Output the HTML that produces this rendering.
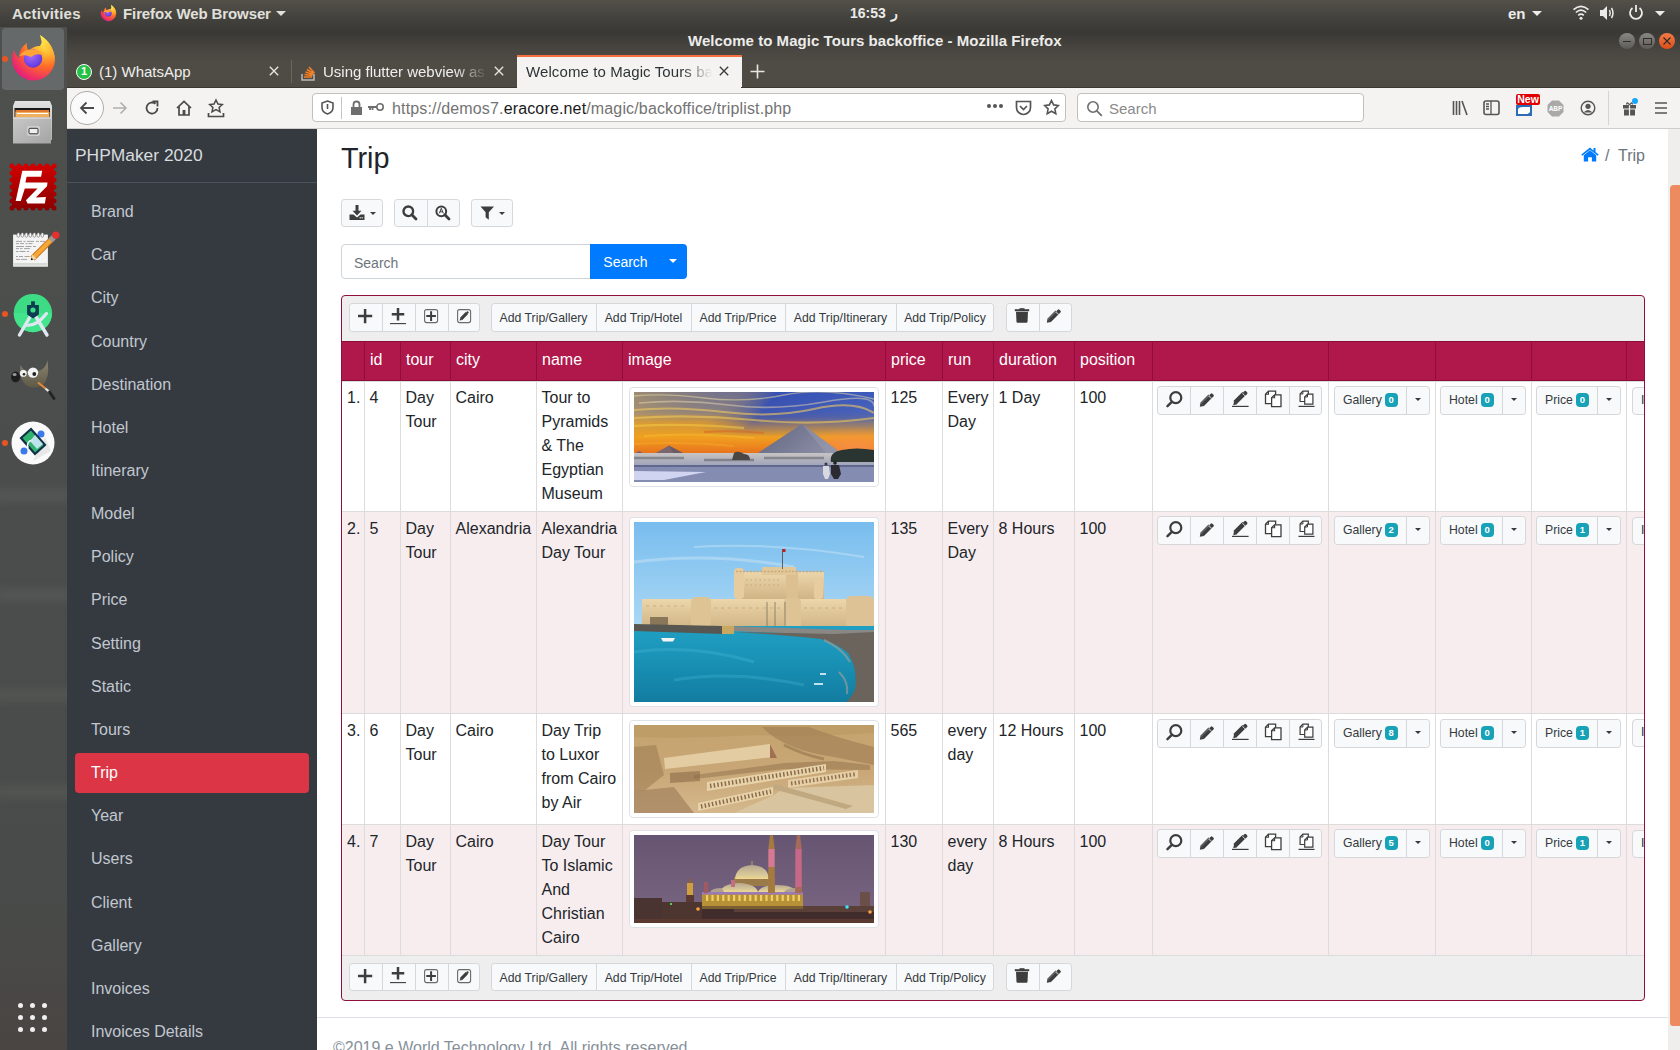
<!DOCTYPE html>
<html><head><meta charset="utf-8">
<style>
*{box-sizing:border-box;margin:0;padding:0}
html,body{width:1680px;height:1050px;overflow:hidden;background:#fff;font-family:"Liberation Sans",sans-serif;position:relative}
.a{position:absolute}
#topbar{left:0;top:0;width:1680px;height:27px;background:linear-gradient(#53504a,#3c3b37);color:#eee;font-size:15px}
#dock{left:0;top:27px;width:67px;height:1023px;background:linear-gradient(#4e504d 0%,#4a4d4c 50%,#484b49 85%,#4a4543 100%)}
#winhead{left:67px;top:27px;width:1613px;height:61px;background:linear-gradient(#3d3c38 0%,#393834 8%,#4a4742 40%,#4f4c46 60%,#4e4b45 100%)}
#nav{left:67px;top:88px;width:1613px;height:41px;background:#f4f3f1;border-bottom:1px solid #cfcdca}
#sidebar{left:67px;top:129px;width:250px;height:921px;background:#343a40}
#main{left:317px;top:129px;width:1351px;height:921px;background:#fff}
#sb{left:1668px;top:129px;width:12px;height:921px;background:#efeeed}
#thumb{left:1670px;top:185px;width:10px;height:841px;background:#ee8a5f;border-radius:4px 0 0 3px}
.nl{position:absolute;left:91px;font-size:16px;color:#c2c7d0;line-height:24px}
</style></head><body>

<div id="topbar" class="a">
  <div class="a" style="left:12px;top:5px;font-size:15px;font-weight:bold;color:#e0e0dc;letter-spacing:0.2px">Activities</div>
  <svg class="a" style="left:100px;top:4px" width="17" height="18" viewBox="0 0 47 48"><defs><radialGradient id="fxta" cx="0.78" cy="0.15" r="1"><stop offset="0" stop-color="#fff44f"/><stop offset="0.3" stop-color="#ffb02e"/><stop offset="0.55" stop-color="#ff6a2a"/><stop offset="0.8" stop-color="#f0365e"/><stop offset="1" stop-color="#e31587"/></radialGradient><radialGradient id="fxtb" cx="0.4" cy="0.35" r="0.7"><stop offset="0" stop-color="#a86bff"/><stop offset="1" stop-color="#5a36d8"/></radialGradient><linearGradient id="fxtc" x1="0" y1="0" x2="1" y2="1"><stop offset="0" stop-color="#fff44f"/><stop offset="1" stop-color="#ff9a2a"/></linearGradient></defs><path d="M30 1 Q44 10 45 26 A21.5 21.5 0 1 1 4 16 Q6 22 9 24 Q9 14 17 9 Q16 14 19 17 Q23 12 30 12 Q34 6 30 1z" fill="url(#fxta)"/><circle cx="23" cy="24.5" r="9.3" fill="url(#fxtb)"/><path d="M9 22 Q16 13 27 16 Q33 18 34 22 Q27 18 21 23 Q16 20 9 22z" fill="#ffa436"/><path d="M30 1 Q44 10 45 26 Q41 16 33 13z" fill="url(#fxtc)" opacity="0.9"/></svg>
  <div class="a" style="left:123px;top:5px;font-size:15px;font-weight:bold;color:#e0e0dc;letter-spacing:-0.1px">Firefox Web Browser</div>
  <div class="a" style="left:276px;top:11px;width:0;height:0;border-left:5px solid transparent;border-right:5px solid transparent;border-top:5px solid #e0e0dc"></div>
  <div class="a" style="left:850px;top:5px;font-size:14px;font-weight:bold;color:#ececea">16:53</div>
  <div class="a" style="left:891px;top:5px;font-size:14px;font-weight:bold;color:#ececea">ر</div>
  <div class="a" style="left:1508px;top:5px;font-size:15px;font-weight:bold;color:#ececea">en</div>
  <div class="a" style="left:1532px;top:11px;width:0;height:0;border-left:5px solid transparent;border-right:5px solid transparent;border-top:5px solid #ececea"></div>
  <svg class="a" style="left:1572px;top:5px" width="18" height="15" viewBox="0 0 18 16"><path d="M1 5 Q9 -2 17 5" stroke="#ececea" stroke-width="1.8" fill="none"/><path d="M3.5 8 Q9 3 14.5 8" stroke="#ececea" stroke-width="1.8" fill="none"/><path d="M6 11 Q9 8.5 12 11" stroke="#ececea" stroke-width="1.8" fill="none"/><circle cx="9" cy="14" r="1.6" fill="#ececea"/></svg>
  <svg class="a" style="left:1599px;top:5px" width="17" height="16" viewBox="0 0 17 16"><path d="M1 5h3l4-4v14l-4-4H1z" fill="#ececea"/><path d="M10.5 5 Q12 8 10.5 11" stroke="#ececea" stroke-width="1.5" fill="none"/><path d="M12.5 3 Q15.5 8 12.5 13" stroke="#ececea" stroke-width="1.5" fill="none"/></svg>
  <svg class="a" style="left:1628px;top:4px" width="16" height="17" viewBox="0 0 16 17"><path d="M4.5 4 A6 6 0 1 0 11.5 4" stroke="#ececea" stroke-width="1.8" fill="none"/><path d="M8 1v7" stroke="#ececea" stroke-width="1.8"/></svg>
  <div class="a" style="left:1655px;top:11px;width:0;height:0;border-left:5px solid transparent;border-right:5px solid transparent;border-top:5px solid #ececea"></div>
</div>
<div id="dock" class="a" style="overflow:hidden">
  <div class="a" style="left:-5px;top:461px;width:80px;height:14px;background:rgba(200,200,190,0.07);filter:blur(4px)"></div>
  <div class="a" style="left:-5px;top:561px;width:80px;height:14px;background:rgba(200,200,190,0.07);filter:blur(4px)"></div>
  <div class="a" style="left:-5px;top:661px;width:80px;height:14px;background:rgba(200,200,190,0.07);filter:blur(4px)"></div>
  <div class="a" style="left:-5px;top:758px;width:80px;height:14px;background:rgba(200,200,190,0.07);filter:blur(4px)"></div>
  <div class="a" style="left:2px;top:1px;width:62px;height:62px;border-radius:4px;background:#666969"></div>
  <div class="a" style="left:2px;top:29px;width:6px;height:6px;border-radius:3px;background:#e95420"></div>
  <svg class="a" style="left:10px;top:7px" width="47" height="48" viewBox="0 0 47 48"><defs><radialGradient id="fxda" cx="0.78" cy="0.15" r="1"><stop offset="0" stop-color="#fff44f"/><stop offset="0.3" stop-color="#ffb02e"/><stop offset="0.55" stop-color="#ff6a2a"/><stop offset="0.8" stop-color="#f0365e"/><stop offset="1" stop-color="#e31587"/></radialGradient><radialGradient id="fxdb" cx="0.4" cy="0.35" r="0.7"><stop offset="0" stop-color="#a86bff"/><stop offset="1" stop-color="#5a36d8"/></radialGradient><linearGradient id="fxdc" x1="0" y1="0" x2="1" y2="1"><stop offset="0" stop-color="#fff44f"/><stop offset="1" stop-color="#ff9a2a"/></linearGradient></defs><path d="M30 1 Q44 10 45 26 A21.5 21.5 0 1 1 4 16 Q6 22 9 24 Q9 14 17 9 Q16 14 19 17 Q23 12 30 12 Q34 6 30 1z" fill="url(#fxda)"/><circle cx="23" cy="24.5" r="9.3" fill="url(#fxdb)"/><path d="M9 22 Q16 13 27 16 Q33 18 34 22 Q27 18 21 23 Q16 20 9 22z" fill="#ffa436"/><path d="M30 1 Q44 10 45 26 Q41 16 33 13z" fill="url(#fxdc)" opacity="0.9"/></svg>
  <svg class="a" style="left:10px;top:73px" width="44" height="45" viewBox="0 0 44 45"><defs><linearGradient id="cab" x1="0" y1="0" x2="0" y2="1"><stop offset="0" stop-color="#e2e2e2"/><stop offset="1" stop-color="#b0b0b0"/></linearGradient><linearGradient id="cab2" x1="0" y1="0" x2="1" y2="1"><stop offset="0" stop-color="#c8c8c8"/><stop offset="1" stop-color="#a4a4a4"/></linearGradient></defs><path d="M3 6 L5 1 H40 L42 6 V40 H3z" fill="url(#cab)"/><rect x="4.5" y="8" width="35.5" height="9.5" fill="#1a1a1a"/><rect x="5.5" y="10" width="33.5" height="7" fill="#e07a30"/><rect x="5.5" y="12" width="34" height="5.5" fill="#f0b060"/><rect x="7" y="13" width="31" height="1" fill="#fff"/><rect x="3" y="17.5" width="38" height="26" fill="url(#cab2)"/><rect x="3" y="17.5" width="38" height="1" fill="#e8e8e8"/><rect x="17" y="26" width="13" height="10" rx="2" fill="#d0d0d0"/><rect x="19" y="28.3" width="9" height="5.5" rx="1" fill="#eee" stroke="#333" stroke-width="1"/></svg>
  <svg class="a" style="left:9px;top:136px" width="48" height="48" viewBox="0 0 48 48"><defs><linearGradient id="fzg" x1="0" y1="0" x2="0" y2="1"><stop offset="0" stop-color="#cf0000"/><stop offset="1" stop-color="#8e0000"/></linearGradient></defs><rect x="3" y="3" width="42" height="42" fill="url(#fzg)"/><rect x="3" y="3" width="42" height="42" fill="none" stroke="url(#fzg)" stroke-width="5" stroke-dasharray="0 7" stroke-linecap="round"/><path d="M13.3 7.7H33.2L32.1 13.8H17.6L16.4 19.5H38.5L38 23.2L26.8 34.4L36.9 34L35.9 40.5H18.6L17 37.3L28.5 25.6H15.8L11.8 37.9H6.7Z" fill="#fff"/></svg>
  <svg class="a" style="left:5px;top:195px" width="57" height="53" viewBox="0 0 57 53"><rect x="8.1" y="12.6" width="34.8" height="32.1" fill="#f4f4f4"/><rect x="8.6" y="41" width="33.8" height="2.6" fill="#d6dad4"/><ellipse cx="13.3" cy="13" rx="1.4" ry="2.3" fill="#fafafa" stroke="#666" stroke-width="0.6"/><ellipse cx="17.3" cy="13" rx="1.4" ry="2.3" fill="#fafafa" stroke="#666" stroke-width="0.6"/><ellipse cx="21.3" cy="13" rx="1.4" ry="2.3" fill="#fafafa" stroke="#666" stroke-width="0.6"/><ellipse cx="25.3" cy="13" rx="1.4" ry="2.3" fill="#fafafa" stroke="#666" stroke-width="0.6"/><ellipse cx="29.3" cy="13" rx="1.4" ry="2.3" fill="#fafafa" stroke="#666" stroke-width="0.6"/><ellipse cx="33.3" cy="13" rx="1.4" ry="2.3" fill="#fafafa" stroke="#666" stroke-width="0.6"/><ellipse cx="37.3" cy="13" rx="1.4" ry="2.3" fill="#fafafa" stroke="#666" stroke-width="0.6"/><path d="M11 19.4h6M18.5 19.4h2M22 19.4h7M31 19.4h3M35 19.4h5M11 21.6h3M15 21.6h4M20.5 21.6h2M23.5 21.6h4M11 24.5h8M20.5 24.5h6M28 24.5h3M11 26.6h3M15 26.6h2.5M19 26.6h6M11 29.5h2.5M14.5 29.5h6M22 29.5h2M11 34.5h2M14 34.5h4M19.5 34.5h5M11 37.4h4M16 37.4h6" stroke="#9a9a9a" stroke-width="0.9"/><path d="M27.5 36.5L47.5 16.5" stroke="#c86a10" stroke-width="6"/><path d="M27.8 36.2L47.2 16.8" stroke="#f4a838" stroke-width="4.2"/><path d="M25.8 38.2L27.2 32.5L31.5 36.8z" fill="#f0d8b0"/><path d="M25.8 38.2L26.4 35.8L28.2 37.6z" fill="#111"/><path d="M45.5 18.5L49 15" stroke="#9a9a9a" stroke-width="5.5"/><circle cx="50.8" cy="13.2" r="3.6" fill="#e83030"/></svg>
  <div class="a" style="left:2px;top:284px;width:6px;height:6px;border-radius:3px;background:#e95420"></div>
  <svg class="a" style="left:8px;top:258px" width="50" height="60" viewBox="0 0 50 60"><circle cx="24.9" cy="28.1" r="19.2" fill="#3ddc84"/><path d="M5.7 28.1A19.2 19.2 0 0 0 44.1 28.1z" fill="#45e890" opacity="0.7"/><path d="M11.5 50 L22.5 31 M39 50 L27.5 31" stroke="#dfe8f2" stroke-width="3.4" stroke-linecap="round"/><path d="M17.5 40 Q28 42 38.5 28.5" stroke="#dfe8f2" stroke-width="3.2" fill="none" stroke-linecap="round"/><path d="M19.1 20h11.8v9.5L25 33.5l-5.9-4z" fill="#0d3b50"/><rect x="23.1" y="16.3" width="3.8" height="4" fill="#0d3b50"/><circle cx="25" cy="25" r="2.6" fill="#3ddc84"/></svg>
  <svg class="a" style="left:5px;top:323px" width="57" height="60" viewBox="0 0 57 60"><defs><linearGradient id="gmp" x1="0" y1="0" x2="0" y2="1"><stop offset="0" stop-color="#8a8470"/><stop offset="1" stop-color="#5e5846"/></linearGradient></defs><path d="M15.4 15Q14 30 22 36Q30 40 38 35Q45 28 42.6 10.6Q40 20 33 21L22 21Q18 20 15.4 15z" fill="url(#gmp)"/><ellipse cx="10.6" cy="26.9" rx="4.6" ry="5.3" fill="#1e1e1e"/><ellipse cx="9.6" cy="24.6" rx="2" ry="1.5" fill="#9a9a9a"/><circle cx="18.3" cy="23.4" r="3.4" fill="#f2f2f2"/><circle cx="19" cy="24.2" r="1.3" fill="#222"/><circle cx="28" cy="22.6" r="5.2" fill="#f2f2f2"/><circle cx="29.3" cy="24" r="1.9" fill="#222"/><path d="M33 32.5L40.5 38.5" stroke="#e08a3a" stroke-width="2.2"/><path d="M40.5 38.5L44.5 42" stroke="#e8e8e8" stroke-width="2.2"/><path d="M44.5 42L49 48.5" stroke="#222" stroke-width="2.8" stroke-linecap="round"/></svg>
  <div class="a" style="left:2px;top:413px;width:6px;height:6px;border-radius:3px;background:#e95420"></div>
  <svg class="a" style="left:11px;top:394px" width="44" height="44" viewBox="0 0 44 44"><circle cx="22" cy="22" r="21.5" fill="#fafafa"/><path d="M22 40 L40 30 L34 16z" fill="#e0e0e0" opacity="0.7"/><circle cx="13" cy="30" r="3.5" fill="#3b7ae8"/><circle cx="30" cy="13" r="3.5" fill="#3b7ae8"/><path d="M10 17 L20 8 L34 24 L24 33z" fill="#2fb36e" stroke="#103048" stroke-width="2.2"/><path d="M22 19 Q15 20 17 27" stroke="#fff" stroke-width="1.5" fill="none"/><path d="M24 14 L32 23 L26 28 L19 20z" fill="#cde8f8" opacity="0.9"/></svg>
  <div class="a" style="left:18px;top:976px;width:5px;height:5px;border-radius:50%;background:#f0f0f0;box-shadow:12px 0 0 #f0f0f0,24px 0 0 #f0f0f0,0 12px 0 #f0f0f0,12px 12px 0 #f0f0f0,24px 12px 0 #f0f0f0,0 24px 0 #f0f0f0,12px 24px 0 #f0f0f0,24px 24px 0 #f0f0f0"></div>
</div>
</div>
<div id="winhead" class="a">
  <div class="a" style="left:621px;top:5px;font-size:15px;font-weight:bold;color:#ececea;letter-spacing:0.05px">Welcome to Magic Tours backoffice - Mozilla Firefox</div>
  <div class="a" style="left:1552px;top:6px;width:16px;height:16px;border-radius:50%;background:linear-gradient(#8a8884,#5c5a56)"><div class="a" style="left:4px;top:7.5px;width:8px;height:1.3px;background:#2f2e2a"></div></div>
  <div class="a" style="left:1572px;top:6px;width:16px;height:16px;border-radius:50%;background:linear-gradient(#8a8884,#5c5a56)"><div class="a" style="left:3.5px;top:4.5px;width:9px;height:7px;border:1.3px solid #2f2e2a"></div></div>
  <div class="a" style="left:1592px;top:6px;width:16px;height:16px;border-radius:50%;background:linear-gradient(#f47a45,#dc4f1c)"><svg class="a" style="left:4px;top:4px" width="8" height="8" viewBox="0 0 8 8"><path d="M0.5 0.5l7 7M7.5 0.5l-7 7" stroke="#2a2a2a" stroke-width="1.1"/></svg></div>
  <!-- tabs -->
  <div class="a" style="left:9px;top:37px;width:16px;height:16px;border-radius:50%;background:#25c143;border:1.5px solid #fff"></div>
  <div class="a" style="left:14px;top:38px;font-size:11px;font-weight:bold;color:#fff">1</div>
  <div class="a" style="left:32px;top:36px;font-size:15px;color:#eeeeec">(1) WhatsApp</div>
  <svg class="a" style="left:202.0px;top:39px" width="10" height="10" viewBox="0 0 10 10"><path d="M0.8 0.8l8.4 8.4M9.2 0.8L0.8 9.2" stroke="#e7e6e3" stroke-width="1.35"/></svg>
  <div class="a" style="left:224px;top:33px;width:1px;height:23px;background:#6a6760"></div>
  <svg class="a" style="left:234px;top:37px" width="15" height="17" viewBox="0 0 15 17"><path d="M1 10v6h12v-6" stroke="#bcbbbb" stroke-width="1.5" fill="none"/><path d="M3 13h8M3.5 10.5l8 1M4.5 8l7.5 2.5M6 5.5l6.5 4M8 3l5.5 6" stroke="#f48024" stroke-width="1.6"/></svg>
  <div class="a" style="left:256px;top:36px;width:165px;overflow:hidden;white-space:nowrap;font-size:15px;color:#eeeeec;-webkit-mask-image:linear-gradient(90deg,#000 80%,transparent)">Using flutter webview as a</div>
  <svg class="a" style="left:426.5px;top:39px" width="10" height="10" viewBox="0 0 10 10"><path d="M0.8 0.8l8.4 8.4M9.2 0.8L0.8 9.2" stroke="#e7e6e3" stroke-width="1.35"/></svg>
  <div class="a" style="left:450px;top:28px;width:225px;height:33px;background:#f4f3f1;border-top:2px solid #f4703f"></div>
  <div class="a" style="left:459px;top:36px;width:186px;overflow:hidden;white-space:nowrap;font-size:15px;color:#2e3436;letter-spacing:0.1px;-webkit-mask-image:linear-gradient(90deg,#000 84%,transparent 100%)">Welcome to Magic Tours backoffice</div>
  <svg class="a" style="left:652.0px;top:39px" width="10" height="10" viewBox="0 0 10 10"><path d="M0.8 0.8l8.4 8.4M9.2 0.8L0.8 9.2" stroke="#3c3c3c" stroke-width="1.35"/></svg>
  <svg class="a" style="left:683px;top:37px" width="15" height="15" viewBox="0 0 15 15"><path d="M7.5 0.5v14M0.5 7.5h14" stroke="#e7e6e3" stroke-width="1.6"/></svg>
</div>
<div class="a" style="left:67px;top:87px;width:450px;height:1px;background:#393833"></div>
<div class="a" style="left:741px;top:87px;width:939px;height:1px;background:#393833"></div>
<div id="nav" class="a">
  <div class="a" style="left:3px;top:3px;width:34px;height:34px;border-radius:50%;border:1px solid #aeaca8;background:#fafafa"></div>
  <svg class="a" style="left:11px;top:11px" width="18" height="18" viewBox="0 0 18 18"><path d="M16 9H3M8.5 3.5L3 9l5.5 5.5" stroke="#4a4a4a" stroke-width="1.8" fill="none"/></svg>
  <svg class="a" style="left:44px;top:11px" width="18" height="18" viewBox="0 0 18 18"><path d="M2 9h13M9.5 3.5L15 9l-5.5 5.5" stroke="#b0b0b0" stroke-width="1.6" fill="none"/></svg>
  <svg class="a" style="left:76px;top:11px" width="18" height="18" viewBox="0 0 18 18"><path d="M14.5 9A5.5 5.5 0 1 1 12.5 4.8" stroke="#4a4a4a" stroke-width="1.8" fill="none"/><path d="M9.5 2.5h5v5" stroke="#4a4a4a" stroke-width="1.8" fill="none"/></svg>
  <svg class="a" style="left:108px;top:11px" width="18" height="18" viewBox="0 0 18 18"><path d="M2 9l7-6.5L16 9M4 7.5V16h10V7.5" stroke="#4a4a4a" stroke-width="1.7" fill="none"/><rect x="7.6" y="11" width="2.8" height="5" fill="#4a4a4a"/></svg>
  <svg class="a" style="left:140px;top:10px" width="18" height="20" viewBox="0 0 18 20"><path d="M9 2l2 4 4.3.5-3.2 3 .9 4.3L9 11.6l-4 2.2.9-4.3-3.2-3L7 6z" stroke="#4a4a4a" stroke-width="1.5" fill="none"/><path d="M1.5 15v3.5h15V15" stroke="#4a4a4a" stroke-width="1.7" fill="none"/></svg>
  <div class="a" style="left:245px;top:5px;width:754px;height:29px;border:1px solid #c2c0bb;border-radius:4px;background:#fff"></div>
  <svg class="a" style="left:254px;top:12px" width="13" height="15" viewBox="0 0 13 15"><path d="M6.5 1L12 3v4.5c0 3.5-2.5 5.5-5.5 6.5C3.5 13 1 11 1 7.5V3z" stroke="#555" stroke-width="1.6" fill="none"/><path d="M6.5 4v5" stroke="#555" stroke-width="1.6"/></svg>
  <div class="a" style="left:274px;top:9px;width:1px;height:22px;background:#c8c6c2"></div>
  <svg class="a" style="left:283px;top:12px" width="13" height="15" viewBox="0 0 13 15"><path d="M3.5 7V4.5a3 3 0 0 1 6 0V7" stroke="#6e6e6e" stroke-width="1.8" fill="none"/><rect x="1" y="7" width="11" height="8" fill="#6e6e6e"/></svg>
  <svg class="a" style="left:300px;top:14px" width="18" height="10" viewBox="0 0 18 10"><circle cx="13" cy="5" r="3.2" stroke="#6e6e6e" stroke-width="1.6" fill="none"/><path d="M1 5h9M3 5v3M5.5 5v3" stroke="#6e6e6e" stroke-width="1.8"/></svg>
  <div class="a" style="left:325px;top:12px;font-size:16px;color:#737373;white-space:nowrap;letter-spacing:0.15px">https://demos7.<span style="color:#1a1a1a">eracore.net</span>/magic/backoffice/triplist.php</div>
  <div class="a" style="left:920px;top:16px;width:4px;height:4px;border-radius:2px;background:#555;box-shadow:6px 0 0 #555,12px 0 0 #555"></div>
  <svg class="a" style="left:948px;top:12px" width="17" height="16" viewBox="0 0 17 16"><path d="M1.5 1.5h14v6a7 7 0 0 1-14 0z" stroke="#555" stroke-width="1.7" fill="none"/><path d="M5 6l3.5 3.5L12 6" stroke="#555" stroke-width="1.7" fill="none"/></svg>
  <svg class="a" style="left:976px;top:11px" width="17" height="17" viewBox="0 0 17 17"><path d="M8.5 1.5l2.1 4.4 4.8.6-3.5 3.3.9 4.8-4.3-2.4-4.3 2.4.9-4.8L1.6 6.5l4.8-.6z" stroke="#555" stroke-width="1.6" fill="none"/></svg>
  <div class="a" style="left:1010px;top:5px;width:287px;height:29px;border:1px solid #c2c0bb;border-radius:4px;background:#fff"></div>
  <svg class="a" style="left:1019px;top:12px" width="17" height="17" viewBox="0 0 17 17"><circle cx="7" cy="7" r="5.2" stroke="#6e6e6e" stroke-width="1.6" fill="none"/><path d="M10.8 10.8l5 5" stroke="#6e6e6e" stroke-width="1.8"/></svg>
  <div class="a" style="left:1042px;top:12px;font-size:15px;color:#8a8a8a">Search</div>
  <svg class="a" style="left:1385px;top:12px" width="16" height="16" viewBox="0 0 16 16"><path d="M1.5 1v14M4.5 1v14M7.5 1v14M10 1l5 14" stroke="#555" stroke-width="1.6"/></svg>
  <svg class="a" style="left:1416px;top:12px" width="17" height="16" viewBox="0 0 17 16"><rect x="1" y="1" width="15" height="13.5" rx="2" stroke="#555" stroke-width="1.6" fill="none"/><path d="M8 1v13.5M3 4h3M3 6.5h3M3 9h3" stroke="#555" stroke-width="1.3"/></svg>
  <div class="a" style="left:1449px;top:17px;width:16px;height:11px;background:#2c6db5"></div>
  <div class="a" style="left:1451px;top:19px;width:12px;height:7px;background:#fff;border-radius:40% 0 40% 0"></div>
  <div class="a" style="left:1449px;top:6px;width:24px;height:11px;background:#e30000;border-radius:2px;color:#fff;font-size:10.5px;line-height:11px;text-align:center;font-weight:bold">New</div>
  <svg class="a" style="left:1480px;top:12px" width="17" height="17" viewBox="0 0 17 17"><path d="M5 0.5h7l4.5 4.5v7L12 16.5H5L0.5 12V5z" fill="#a9a9a9"/><text x="8.5" y="11.3" font-size="6.5" font-weight="bold" fill="#fff" text-anchor="middle" font-family="Liberation Sans">ABP</text></svg>
  <svg class="a" style="left:1513px;top:12px" width="16" height="16" viewBox="0 0 16 16"><circle cx="8" cy="8" r="6.8" stroke="#555" stroke-width="1.4" fill="none"/><circle cx="8" cy="6.3" r="2.6" fill="#555"/><path d="M3.5 12.5Q8 7.5 12.5 12.5" fill="#555"/></svg>
  <div class="a" style="left:1541px;top:3px;width:1px;height:34px;background:#d6d4d0"></div>
  <svg class="a" style="left:1555px;top:13px" width="16" height="15" viewBox="0 0 16 15"><rect x="1" y="4" width="13" height="3.5" fill="#555"/><rect x="2" y="8.5" width="11" height="6" fill="#555"/><path d="M7.5 4v11" stroke="#f4f3f1" stroke-width="1.2"/><path d="M7.5 4Q5 0 4.5 3.5M7.5 4Q10 0 10.5 3.5" stroke="#555" stroke-width="1.3" fill="none"/></svg>
  <div class="a" style="left:1565px;top:10px;width:6px;height:6px;border-radius:3px;background:#16a7ff"></div>
  <svg class="a" style="left:1587px;top:13px" width="14" height="14" viewBox="0 0 14 14"><path d="M1 2h12M1 7h12M1 12h12" stroke="#555" stroke-width="1.7"/></svg>
</div>
<div id="sidebar" class="a">
  <div class="a" style="left:8px;top:13px;font-size:17.4px;color:#d9dcdf;line-height:26px">PHPMaker 2020</div>
  <div class="a" style="left:0;top:53px;width:250px;height:1px;background:#4b545c"></div>
  <div class="nl" style="left:24px;top:71.10px">Brand</div>
  <div class="nl" style="left:24px;top:114.25px">Car</div>
  <div class="nl" style="left:24px;top:157.40px">City</div>
  <div class="nl" style="left:24px;top:200.55px">Country</div>
  <div class="nl" style="left:24px;top:243.70px">Destination</div>
  <div class="nl" style="left:24px;top:286.85px">Hotel</div>
  <div class="nl" style="left:24px;top:330.00px">Itinerary</div>
  <div class="nl" style="left:24px;top:373.15px">Model</div>
  <div class="nl" style="left:24px;top:416.30px">Policy</div>
  <div class="nl" style="left:24px;top:459.45px">Price</div>
  <div class="nl" style="left:24px;top:502.60px">Setting</div>
  <div class="nl" style="left:24px;top:545.75px">Static</div>
  <div class="nl" style="left:24px;top:588.90px">Tours</div>
  <div class="a" style="left:8px;top:623.8px;width:234px;height:40px;background:#dc3545;border-radius:4px"></div>
  <div class="nl" style="left:24px;top:632.05px;color:#fff">Trip</div>
  <div class="nl" style="left:24px;top:675.20px">Year</div>
  <div class="nl" style="left:24px;top:718.35px">Users</div>
  <div class="nl" style="left:24px;top:761.50px">Client</div>
  <div class="nl" style="left:24px;top:804.65px">Gallery</div>
  <div class="nl" style="left:24px;top:847.80px">Invoices</div>
  <div class="nl" style="left:24px;top:890.95px">Invoices Details</div>
</div>
<div id="main" class="a"></div>
<!--MAIN-->
<div class="a" style="left:341px;top:142.2px;white-space:nowrap;font-size:28.8px;line-height:33.6px;color:#212529">Trip</div>
<svg class="a" style="left:1581px;top:147px" width="18" height="15" viewBox="0 0 18 15"><path d="M9 0.5L0.3 7.6l1 1.2L9 2.7l7.7 6.1 1-1.2-3.2-2.6V1h-2v2.7z" fill="#007bff"/><path d="M2.8 8.2L9 3.3l6.2 4.9V14.5h-4.3v-4.3H7.1v4.3H2.8z" fill="#007bff"/></svg>
<div class="a" style="left:1605px;top:144px;white-space:nowrap;font-size:16px;line-height:24px;color:#6c757d">/</div>
<div class="a" style="left:1618px;top:144px;white-space:nowrap;font-size:16px;line-height:24px;color:#6c757d">Trip</div>
<div class="a" style="left:341px;top:199px;width:42px;height:28px;background:#f8f9fa;border:1px solid #d5d7da;border-radius:3.2px"></div>
<svg class="a" style="left:349px;top:205px" width="16" height="16" viewBox="0 0 16 16"><path d="M8 0v8" stroke="#3d3d3d" stroke-width="3"/><path d="M3.5 5.8L8 10.5l4.5-4.7z" fill="#3d3d3d"/><path d="M0.5 9.5h4l3.5 3 3.5-3h4v5.5h-15z" fill="#3d3d3d"/><rect x="10.5" y="12.3" width="1.5" height="1" fill="#eee"/><rect x="12.5" y="12.3" width="1.5" height="1" fill="#eee"/></svg>
<div class="a" style="left:369.5px;top:211.5px;width:0;height:0;border-left:3.0px solid transparent;border-right:3.0px solid transparent;border-top:3.2px solid #3d3d3d"></div>
<div class="a" style="left:394px;top:199px;width:66px;height:28px;background:#f8f9fa;border:1px solid #d5d7da;border-radius:3.2px"></div>
<div class="a" style="left:427px;top:199px;width:1px;height:28px;background:#d5d7da"></div>
<svg class="a" style="left:402px;top:205px" width="16" height="16" viewBox="0 0 16 16"><circle cx="6.3" cy="6.3" r="4.8" stroke="#3d3d3d" stroke-width="2.4" fill="none"/><path d="M9.8 9.8l4.2 4.2" stroke="#3d3d3d" stroke-width="2.8" stroke-linecap="round"/></svg>
<svg class="a" style="left:435px;top:205px" width="16" height="16" viewBox="0 0 16 16"><circle cx="6.3" cy="6.3" r="4.9" stroke="#3d3d3d" stroke-width="2" fill="none"/><path d="M9.8 9.8l4.2 4.2" stroke="#3d3d3d" stroke-width="2.8" stroke-linecap="round"/><path d="M4.3 8.3l2-5 2 5M5 6.8h2.6" stroke="#3d3d3d" stroke-width="1" fill="none"/></svg>
<div class="a" style="left:471px;top:199px;width:42px;height:28px;background:#f8f9fa;border:1px solid #d5d7da;border-radius:3.2px"></div>
<svg class="a" style="left:480px;top:206px" width="15" height="15" viewBox="0 0 15 15"><path d="M0.5 0.5h13.5l-5.2 5.8v7.5l-3.2 -2.5v-5z" fill="#3d3d3d"/></svg>
<div class="a" style="left:498.8px;top:211.8px;width:0;height:0;border-left:3.0px solid transparent;border-right:3.0px solid transparent;border-top:3.2px solid #3d3d3d"></div>
<div class="a" style="left:341px;top:244px;width:250px;height:35px;background:#fff;border:1px solid #ced4da;border-radius:4px 0 0 4px"></div>
<div class="a" style="left:354px;top:252.5px;white-space:nowrap;font-size:14px;line-height:21px;color:#6c757d">Search</div>
<div class="a" style="left:590px;top:244px;width:97px;height:35px;background:#007bff;border-radius:0 4px 4px 0"></div>
<div class="a" style="left:603.3px;top:252px;white-space:nowrap;font-size:14px;line-height:21px;color:#fff">Search</div>
<div class="a" style="left:669px;top:259px;width:0;height:0;border-left:4.0px solid transparent;border-right:4.0px solid transparent;border-top:4px solid #fff"></div>
<div class="a" style="left:341px;top:295px;width:1304px;height:706px;border:1px solid #8e0e3e;border-radius:4px;background:#eeeeee"></div>
<div class="a" style="left:348.5px;top:303px;width:131.5px;height:28.5px;background:#f8f9fa;border:1px solid #d5d7da;border-radius:3.2px"></div>
<div class="a" style="left:381.5px;top:303px;width:1px;height:28.5px;background:#d5d7da"></div>
<div class="a" style="left:414.5px;top:303px;width:1px;height:28.5px;background:#d5d7da"></div>
<div class="a" style="left:447.5px;top:303px;width:1px;height:28.5px;background:#d5d7da"></div>
<svg class="a" style="left:358px;top:309px" width="15" height="15" viewBox="0 0 15 15"><path d="M7.1 0v14.2M0 7.1h14.2" stroke="#3d3d3d" stroke-width="2.5" fill="none"/></svg>
<svg class="a" style="left:390px;top:307.5px" width="16" height="17" viewBox="0 0 16 17"><path d="M8 0v12.5M1.75 6.25h12.5" stroke="#3d3d3d" stroke-width="2.5" fill="none"/><path d="M0 15.6h16" stroke="#3d3d3d" stroke-width="1.1"/></svg>
<svg class="a" style="left:424px;top:309px" width="15" height="15" viewBox="0 0 15 15"><rect x="0.6" y="0.6" width="13" height="13" rx="2" stroke="#6a6a6a" stroke-width="1.1" fill="none"/><path d="M7.1 2.3v9.6M2.3 7.1h9.6" stroke="#3d3d3d" stroke-width="2"/></svg>
<svg class="a" style="left:457px;top:309px" width="15" height="15" viewBox="0 0 15 15"><rect x="0.6" y="0.6" width="13" height="13" rx="2" stroke="#6a6a6a" stroke-width="1.1" fill="none"/><path d="M4.2 9.8l5.6-5.6" stroke="#3d3d3d" stroke-width="3.2"/><path d="M9 3.4l.9-.9q.6-.6 1.2 0l.4.4q.6.6 0 1.2l-.9.9z" fill="#3d3d3d"/><path d="M2.6 11.6l.7-2.8 2.1 2.1z" fill="#3d3d3d"/></svg>
<div class="a" style="left:491px;top:303px;width:503px;height:28.5px;background:#f8f9fa;border:1px solid #d5d7da;border-radius:3.2px"></div>
<div class="a" style="left:596px;top:303px;width:1px;height:28.5px;background:#d5d7da"></div>
<div class="a" style="left:691px;top:303px;width:1px;height:28.5px;background:#d5d7da"></div>
<div class="a" style="left:785px;top:303px;width:1px;height:28.5px;background:#d5d7da"></div>
<div class="a" style="left:896px;top:303px;width:1px;height:28.5px;background:#d5d7da"></div>
<div class="a" style="left:491px;top:304px;width:105px;height:28px;line-height:28px;text-align:center;font-size:12.25px;color:#343a40;white-space:nowrap">Add Trip/Gallery</div>
<div class="a" style="left:596px;top:304px;width:95px;height:28px;line-height:28px;text-align:center;font-size:12.25px;color:#343a40;white-space:nowrap">Add Trip/Hotel</div>
<div class="a" style="left:691px;top:304px;width:94px;height:28px;line-height:28px;text-align:center;font-size:12.25px;color:#343a40;white-space:nowrap">Add Trip/Price</div>
<div class="a" style="left:785px;top:304px;width:111px;height:28px;line-height:28px;text-align:center;font-size:12.25px;color:#343a40;white-space:nowrap">Add Trip/Itinerary</div>
<div class="a" style="left:896px;top:304px;width:98px;height:28px;line-height:28px;text-align:center;font-size:12.25px;color:#343a40;white-space:nowrap">Add Trip/Policy</div>
<div class="a" style="left:1006px;top:303px;width:65.5px;height:28.5px;background:#f8f9fa;border:1px solid #d5d7da;border-radius:3.2px"></div>
<div class="a" style="left:1038.5px;top:303px;width:1px;height:28.5px;background:#d5d7da"></div>
<svg class="a" style="left:1014px;top:307px" width="16" height="16" viewBox="0 0 16 16"><path d="M0.8 3.2h14.4" stroke="#3d3d3d" stroke-width="2"/><rect x="5.5" y="1.2" width="5" height="2" fill="#3d3d3d"/><path d="M2 4.8h12l-0.5 10.2q-0.1 0.8-1 0.8h-9q-0.9 0-1-0.8z" fill="#3d3d3d"/></svg>
<svg class="a" style="left:1046px;top:308px" width="16" height="16" viewBox="0 0 16 16"><path d="M3 12.5l8.2-8.2" stroke="#3d3d3d" stroke-width="4.8"/><path d="M10.2 3.3l1.6-1.6q.8-.8 1.6 0l1.1 1.1q.8.8 0 1.6l-1.6 1.6z" fill="#3d3d3d"/><path d="M0.8 14.7l0.7-4 3.3 3.3z" fill="#3d3d3d"/><path d="M2 11.5l8.5-8.5" stroke="#f8f9fa" stroke-width="0.6" opacity="0.6"/><path d="M9.6 3.9l2.5 2.5" stroke="#f8f9fa" stroke-width="0.8"/></svg>
<div class="a" style="left:348.5px;top:962.5px;width:131.5px;height:28.5px;background:#f8f9fa;border:1px solid #d5d7da;border-radius:3.2px"></div>
<div class="a" style="left:381.5px;top:962.5px;width:1px;height:28.5px;background:#d5d7da"></div>
<div class="a" style="left:414.5px;top:962.5px;width:1px;height:28.5px;background:#d5d7da"></div>
<div class="a" style="left:447.5px;top:962.5px;width:1px;height:28.5px;background:#d5d7da"></div>
<svg class="a" style="left:358px;top:968.5px" width="15" height="15" viewBox="0 0 15 15"><path d="M7.1 0v14.2M0 7.1h14.2" stroke="#3d3d3d" stroke-width="2.5" fill="none"/></svg>
<svg class="a" style="left:390px;top:967.0px" width="16" height="17" viewBox="0 0 16 17"><path d="M8 0v12.5M1.75 6.25h12.5" stroke="#3d3d3d" stroke-width="2.5" fill="none"/><path d="M0 15.6h16" stroke="#3d3d3d" stroke-width="1.1"/></svg>
<svg class="a" style="left:424px;top:968.5px" width="15" height="15" viewBox="0 0 15 15"><rect x="0.6" y="0.6" width="13" height="13" rx="2" stroke="#6a6a6a" stroke-width="1.1" fill="none"/><path d="M7.1 2.3v9.6M2.3 7.1h9.6" stroke="#3d3d3d" stroke-width="2"/></svg>
<svg class="a" style="left:457px;top:968.5px" width="15" height="15" viewBox="0 0 15 15"><rect x="0.6" y="0.6" width="13" height="13" rx="2" stroke="#6a6a6a" stroke-width="1.1" fill="none"/><path d="M4.2 9.8l5.6-5.6" stroke="#3d3d3d" stroke-width="3.2"/><path d="M9 3.4l.9-.9q.6-.6 1.2 0l.4.4q.6.6 0 1.2l-.9.9z" fill="#3d3d3d"/><path d="M2.6 11.6l.7-2.8 2.1 2.1z" fill="#3d3d3d"/></svg>
<div class="a" style="left:491px;top:962.5px;width:503px;height:28.5px;background:#f8f9fa;border:1px solid #d5d7da;border-radius:3.2px"></div>
<div class="a" style="left:596px;top:962.5px;width:1px;height:28.5px;background:#d5d7da"></div>
<div class="a" style="left:691px;top:962.5px;width:1px;height:28.5px;background:#d5d7da"></div>
<div class="a" style="left:785px;top:962.5px;width:1px;height:28.5px;background:#d5d7da"></div>
<div class="a" style="left:896px;top:962.5px;width:1px;height:28.5px;background:#d5d7da"></div>
<div class="a" style="left:491px;top:963.5px;width:105px;height:28px;line-height:28px;text-align:center;font-size:12.25px;color:#343a40;white-space:nowrap">Add Trip/Gallery</div>
<div class="a" style="left:596px;top:963.5px;width:95px;height:28px;line-height:28px;text-align:center;font-size:12.25px;color:#343a40;white-space:nowrap">Add Trip/Hotel</div>
<div class="a" style="left:691px;top:963.5px;width:94px;height:28px;line-height:28px;text-align:center;font-size:12.25px;color:#343a40;white-space:nowrap">Add Trip/Price</div>
<div class="a" style="left:785px;top:963.5px;width:111px;height:28px;line-height:28px;text-align:center;font-size:12.25px;color:#343a40;white-space:nowrap">Add Trip/Itinerary</div>
<div class="a" style="left:896px;top:963.5px;width:98px;height:28px;line-height:28px;text-align:center;font-size:12.25px;color:#343a40;white-space:nowrap">Add Trip/Policy</div>
<div class="a" style="left:1006px;top:962.5px;width:65.5px;height:28.5px;background:#f8f9fa;border:1px solid #d5d7da;border-radius:3.2px"></div>
<div class="a" style="left:1038.5px;top:962.5px;width:1px;height:28.5px;background:#d5d7da"></div>
<svg class="a" style="left:1014px;top:966.5px" width="16" height="16" viewBox="0 0 16 16"><path d="M0.8 3.2h14.4" stroke="#3d3d3d" stroke-width="2"/><rect x="5.5" y="1.2" width="5" height="2" fill="#3d3d3d"/><path d="M2 4.8h12l-0.5 10.2q-0.1 0.8-1 0.8h-9q-0.9 0-1-0.8z" fill="#3d3d3d"/></svg>
<svg class="a" style="left:1046px;top:967.5px" width="16" height="16" viewBox="0 0 16 16"><path d="M3 12.5l8.2-8.2" stroke="#3d3d3d" stroke-width="4.8"/><path d="M10.2 3.3l1.6-1.6q.8-.8 1.6 0l1.1 1.1q.8.8 0 1.6l-1.6 1.6z" fill="#3d3d3d"/><path d="M0.8 14.7l0.7-4 3.3 3.3z" fill="#3d3d3d"/><path d="M2 11.5l8.5-8.5" stroke="#f8f9fa" stroke-width="0.6" opacity="0.6"/><path d="M9.6 3.9l2.5 2.5" stroke="#f8f9fa" stroke-width="0.8"/></svg>
<div class="a" style="left:342px;top:341px;width:1302px;height:40px;background:#b0174a;border-top:1px solid #8a0d38;border-bottom:1px solid #8a0d38"></div>
<div class="a" style="left:364px;top:341px;width:1px;height:40px;background:#8f0f3c"></div>
<div class="a" style="left:370px;top:347.5px;white-space:nowrap;font-size:16px;line-height:24px;color:#fff">id</div>
<div class="a" style="left:400px;top:341px;width:1px;height:40px;background:#8f0f3c"></div>
<div class="a" style="left:406px;top:347.5px;white-space:nowrap;font-size:16px;line-height:24px;color:#fff">tour</div>
<div class="a" style="left:450px;top:341px;width:1px;height:40px;background:#8f0f3c"></div>
<div class="a" style="left:456px;top:347.5px;white-space:nowrap;font-size:16px;line-height:24px;color:#fff">city</div>
<div class="a" style="left:536px;top:341px;width:1px;height:40px;background:#8f0f3c"></div>
<div class="a" style="left:542px;top:347.5px;white-space:nowrap;font-size:16px;line-height:24px;color:#fff">name</div>
<div class="a" style="left:622px;top:341px;width:1px;height:40px;background:#8f0f3c"></div>
<div class="a" style="left:628px;top:347.5px;white-space:nowrap;font-size:16px;line-height:24px;color:#fff">image</div>
<div class="a" style="left:885px;top:341px;width:1px;height:40px;background:#8f0f3c"></div>
<div class="a" style="left:891px;top:347.5px;white-space:nowrap;font-size:16px;line-height:24px;color:#fff">price</div>
<div class="a" style="left:942px;top:341px;width:1px;height:40px;background:#8f0f3c"></div>
<div class="a" style="left:948px;top:347.5px;white-space:nowrap;font-size:16px;line-height:24px;color:#fff">run</div>
<div class="a" style="left:993px;top:341px;width:1px;height:40px;background:#8f0f3c"></div>
<div class="a" style="left:999px;top:347.5px;white-space:nowrap;font-size:16px;line-height:24px;color:#fff">duration</div>
<div class="a" style="left:1074px;top:341px;width:1px;height:40px;background:#8f0f3c"></div>
<div class="a" style="left:1080px;top:347.5px;white-space:nowrap;font-size:16px;line-height:24px;color:#fff">position</div>
<div class="a" style="left:1152px;top:341px;width:1px;height:40px;background:#8f0f3c"></div>
<div class="a" style="left:1328px;top:341px;width:1px;height:40px;background:#8f0f3c"></div>
<div class="a" style="left:1435px;top:341px;width:1px;height:40px;background:#8f0f3c"></div>
<div class="a" style="left:1531px;top:341px;width:1px;height:40px;background:#8f0f3c"></div>
<div class="a" style="left:1626px;top:341px;width:1px;height:40px;background:#8f0f3c"></div>
<div class="a" style="left:342px;top:381px;width:1302px;height:130px;background:#fff;border-top:1px solid #dcdcdc"></div>
<div class="a" style="left:364px;top:381px;width:1px;height:130px;background:#dcdcdc"></div>
<div class="a" style="left:400px;top:381px;width:1px;height:130px;background:#dcdcdc"></div>
<div class="a" style="left:450px;top:381px;width:1px;height:130px;background:#dcdcdc"></div>
<div class="a" style="left:536px;top:381px;width:1px;height:130px;background:#dcdcdc"></div>
<div class="a" style="left:622px;top:381px;width:1px;height:130px;background:#dcdcdc"></div>
<div class="a" style="left:885px;top:381px;width:1px;height:130px;background:#dcdcdc"></div>
<div class="a" style="left:942px;top:381px;width:1px;height:130px;background:#dcdcdc"></div>
<div class="a" style="left:993px;top:381px;width:1px;height:130px;background:#dcdcdc"></div>
<div class="a" style="left:1074px;top:381px;width:1px;height:130px;background:#dcdcdc"></div>
<div class="a" style="left:1152px;top:381px;width:1px;height:130px;background:#dcdcdc"></div>
<div class="a" style="left:1328px;top:381px;width:1px;height:130px;background:#dcdcdc"></div>
<div class="a" style="left:1435px;top:381px;width:1px;height:130px;background:#dcdcdc"></div>
<div class="a" style="left:1531px;top:381px;width:1px;height:130px;background:#dcdcdc"></div>
<div class="a" style="left:1626px;top:381px;width:1px;height:130px;background:#dcdcdc"></div>
<div class="a" style="left:342px;top:511px;width:1302px;height:202px;background:#f7edef;border-top:1px solid #dcdcdc"></div>
<div class="a" style="left:364px;top:511px;width:1px;height:202px;background:#dcdcdc"></div>
<div class="a" style="left:400px;top:511px;width:1px;height:202px;background:#dcdcdc"></div>
<div class="a" style="left:450px;top:511px;width:1px;height:202px;background:#dcdcdc"></div>
<div class="a" style="left:536px;top:511px;width:1px;height:202px;background:#dcdcdc"></div>
<div class="a" style="left:622px;top:511px;width:1px;height:202px;background:#dcdcdc"></div>
<div class="a" style="left:885px;top:511px;width:1px;height:202px;background:#dcdcdc"></div>
<div class="a" style="left:942px;top:511px;width:1px;height:202px;background:#dcdcdc"></div>
<div class="a" style="left:993px;top:511px;width:1px;height:202px;background:#dcdcdc"></div>
<div class="a" style="left:1074px;top:511px;width:1px;height:202px;background:#dcdcdc"></div>
<div class="a" style="left:1152px;top:511px;width:1px;height:202px;background:#dcdcdc"></div>
<div class="a" style="left:1328px;top:511px;width:1px;height:202px;background:#dcdcdc"></div>
<div class="a" style="left:1435px;top:511px;width:1px;height:202px;background:#dcdcdc"></div>
<div class="a" style="left:1531px;top:511px;width:1px;height:202px;background:#dcdcdc"></div>
<div class="a" style="left:1626px;top:511px;width:1px;height:202px;background:#dcdcdc"></div>
<div class="a" style="left:342px;top:713px;width:1302px;height:111px;background:#fff;border-top:1px solid #dcdcdc"></div>
<div class="a" style="left:364px;top:713px;width:1px;height:111px;background:#dcdcdc"></div>
<div class="a" style="left:400px;top:713px;width:1px;height:111px;background:#dcdcdc"></div>
<div class="a" style="left:450px;top:713px;width:1px;height:111px;background:#dcdcdc"></div>
<div class="a" style="left:536px;top:713px;width:1px;height:111px;background:#dcdcdc"></div>
<div class="a" style="left:622px;top:713px;width:1px;height:111px;background:#dcdcdc"></div>
<div class="a" style="left:885px;top:713px;width:1px;height:111px;background:#dcdcdc"></div>
<div class="a" style="left:942px;top:713px;width:1px;height:111px;background:#dcdcdc"></div>
<div class="a" style="left:993px;top:713px;width:1px;height:111px;background:#dcdcdc"></div>
<div class="a" style="left:1074px;top:713px;width:1px;height:111px;background:#dcdcdc"></div>
<div class="a" style="left:1152px;top:713px;width:1px;height:111px;background:#dcdcdc"></div>
<div class="a" style="left:1328px;top:713px;width:1px;height:111px;background:#dcdcdc"></div>
<div class="a" style="left:1435px;top:713px;width:1px;height:111px;background:#dcdcdc"></div>
<div class="a" style="left:1531px;top:713px;width:1px;height:111px;background:#dcdcdc"></div>
<div class="a" style="left:1626px;top:713px;width:1px;height:111px;background:#dcdcdc"></div>
<div class="a" style="left:342px;top:824px;width:1302px;height:131px;background:#f7edef;border-top:1px solid #dcdcdc"></div>
<div class="a" style="left:364px;top:824px;width:1px;height:131px;background:#dcdcdc"></div>
<div class="a" style="left:400px;top:824px;width:1px;height:131px;background:#dcdcdc"></div>
<div class="a" style="left:450px;top:824px;width:1px;height:131px;background:#dcdcdc"></div>
<div class="a" style="left:536px;top:824px;width:1px;height:131px;background:#dcdcdc"></div>
<div class="a" style="left:622px;top:824px;width:1px;height:131px;background:#dcdcdc"></div>
<div class="a" style="left:885px;top:824px;width:1px;height:131px;background:#dcdcdc"></div>
<div class="a" style="left:942px;top:824px;width:1px;height:131px;background:#dcdcdc"></div>
<div class="a" style="left:993px;top:824px;width:1px;height:131px;background:#dcdcdc"></div>
<div class="a" style="left:1074px;top:824px;width:1px;height:131px;background:#dcdcdc"></div>
<div class="a" style="left:1152px;top:824px;width:1px;height:131px;background:#dcdcdc"></div>
<div class="a" style="left:1328px;top:824px;width:1px;height:131px;background:#dcdcdc"></div>
<div class="a" style="left:1435px;top:824px;width:1px;height:131px;background:#dcdcdc"></div>
<div class="a" style="left:1531px;top:824px;width:1px;height:131px;background:#dcdcdc"></div>
<div class="a" style="left:1626px;top:824px;width:1px;height:131px;background:#dcdcdc"></div>
<div class="a" style="left:342px;top:955px;width:1302px;height:1px;background:#dcdcdc"></div>
<div class="a" style="left:347px;top:385.8px;white-space:nowrap;font-size:16px;line-height:24px;color:#212529">1.</div>
<div class="a" style="left:369.5px;top:385.8px;white-space:nowrap;font-size:16px;line-height:24px;color:#212529">4</div>
<div class="a" style="left:405.5px;top:385.8px;white-space:nowrap;font-size:16px;line-height:24px;color:#212529">Day<br>Tour</div>
<div class="a" style="left:455.5px;top:385.8px;white-space:nowrap;font-size:16px;line-height:24px;color:#212529">Cairo</div>
<div class="a" style="left:541.5px;top:385.8px;white-space:nowrap;font-size:16px;line-height:24px;color:#212529">Tour to<br>Pyramids<br>&amp; The<br>Egyptian<br>Museum</div>
<div class="a" style="left:890.5px;top:385.8px;white-space:nowrap;font-size:16px;line-height:24px;color:#212529">125</div>
<div class="a" style="left:947.5px;top:385.8px;white-space:nowrap;font-size:16px;line-height:24px;color:#212529">Every<br>Day</div>
<div class="a" style="left:998.5px;top:385.8px;white-space:nowrap;font-size:16px;line-height:24px;color:#212529">1 Day</div>
<div class="a" style="left:1079.5px;top:385.8px;white-space:nowrap;font-size:16px;line-height:24px;color:#212529">100</div>
<div class="a" style="left:1157px;top:386.4px;width:165px;height:28.8px;background:#f8f9fa;border:1px solid #d5d7da;border-radius:3.2px"></div>
<div class="a" style="left:1190px;top:386.4px;width:1px;height:28.8px;background:#d5d7da"></div>
<div class="a" style="left:1223px;top:386.4px;width:1px;height:28.8px;background:#d5d7da"></div>
<div class="a" style="left:1256px;top:386.4px;width:1px;height:28.8px;background:#d5d7da"></div>
<div class="a" style="left:1289px;top:386.4px;width:1px;height:28.8px;background:#d5d7da"></div>
<svg class="a" style="left:1166px;top:390.4px" width="18" height="18" viewBox="0 0 18 18"><circle cx="9.8" cy="7.7" r="5.5" stroke="#3d3d3d" stroke-width="2.2" fill="none"/><path d="M1.5 16.2l4.3-4.3" stroke="#3d3d3d" stroke-width="2.4" stroke-linecap="round"/></svg>
<svg class="a" style="left:1199px;top:391.9px" width="16" height="16" viewBox="0 0 16 16"><path d="M3 12.5l8.2-8.2" stroke="#3d3d3d" stroke-width="4.8"/><path d="M10.2 3.3l1.6-1.6q.8-.8 1.6 0l1.1 1.1q.8.8 0 1.6l-1.6 1.6z" fill="#3d3d3d"/><path d="M0.8 14.7l0.7-4 3.3 3.3z" fill="#3d3d3d"/><path d="M2 11.5l8.5-8.5" stroke="#f8f9fa" stroke-width="0.6" opacity="0.6"/><path d="M9.6 3.9l2.5 2.5" stroke="#f8f9fa" stroke-width="0.8"/></svg>
<svg class="a" style="left:1231px;top:390.4px" width="18" height="18" viewBox="0 0 18 18"><path d="M4 12.6l9-9" stroke="#3d3d3d" stroke-width="4.6"/><path d="M12 2.6l1.3-1.3q.9-.9 1.8 0l1 1q.9.9 0 1.8l-1.3 1.3z" fill="#3d3d3d"/><path d="M2.2 15.2l0.9-4 3.1 3.1z" fill="#3d3d3d"/><path d="M11.3 3.3l2.6 2.6" stroke="#f8f9fa" stroke-width="0.7"/><path d="M1 16.4h16.6" stroke="#3d3d3d" stroke-width="1.2"/></svg>
<svg class="a" style="left:1264px;top:390.4px" width="18" height="18" viewBox="0 0 18 18"><path d="M1.5 4.2L4.5 1.2H11.6V13.6H1.5Z" stroke="#3d3d3d" stroke-width="1.3" fill="#fff"/><path d="M1.5 4.2H4.5V1.2" stroke="#3d3d3d" stroke-width="1.1" fill="none"/><path d="M7.6 7.8L10.6 4.8H17V16.6H7.6Z" stroke="#3d3d3d" stroke-width="1.3" fill="#fff"/><path d="M7.6 7.8H10.6V4.8" stroke="#3d3d3d" stroke-width="1.1" fill="none"/></svg>
<svg class="a" style="left:1298px;top:390.4px" width="18" height="18" viewBox="0 0 18 18"><path d="M2.1 4L4.9 1.2H10.3V11.5H2.1Z" stroke="#3d3d3d" stroke-width="1.2" fill="#fff"/><path d="M2.1 4H4.9V1.2" stroke="#3d3d3d" stroke-width="1" fill="none"/><path d="M6.7 7L9.5 4.2H14.9V14.2H6.7Z" stroke="#3d3d3d" stroke-width="1.2" fill="#fff"/><path d="M6.7 7H9.5V4.2" stroke="#3d3d3d" stroke-width="1" fill="none"/><path d="M0.5 16.4h16" stroke="#3d3d3d" stroke-width="1.2"/></svg>
<div class="a" style="left:1334px;top:386.4px;width:96px;height:28.8px;background:#f8f9fa;border:1px solid #d5d7da;border-radius:3.2px"></div>
<div class="a" style="left:1406px;top:386.4px;width:1px;height:28.8px;background:#d5d7da"></div>
<div class="a" style="left:1343px;top:391.9px;white-space:nowrap;font-size:12.25px;line-height:17px;color:#343a40">Gallery</div>
<div class="a" style="left:1384.6px;top:393.4px;width:13px;height:14px;background:#17a2b8;border-radius:4px;color:#fff;font-size:9.5px;line-height:14px;text-align:center;font-weight:bold">0</div>
<div class="a" style="left:1415px;top:398.4px;width:0;height:0;border-left:3.25px solid transparent;border-right:3.25px solid transparent;border-top:3.3px solid #343a40"></div>
<div class="a" style="left:1440px;top:386.4px;width:86px;height:28.8px;background:#f8f9fa;border:1px solid #d5d7da;border-radius:3.2px"></div>
<div class="a" style="left:1502px;top:386.4px;width:1px;height:28.8px;background:#d5d7da"></div>
<div class="a" style="left:1449px;top:391.9px;white-space:nowrap;font-size:12.25px;line-height:17px;color:#343a40">Hotel</div>
<div class="a" style="left:1480.6px;top:393.4px;width:13px;height:14px;background:#17a2b8;border-radius:4px;color:#fff;font-size:9.5px;line-height:14px;text-align:center;font-weight:bold">0</div>
<div class="a" style="left:1511px;top:398.4px;width:0;height:0;border-left:3.25px solid transparent;border-right:3.25px solid transparent;border-top:3.3px solid #343a40"></div>
<div class="a" style="left:1536px;top:386.4px;width:85px;height:28.8px;background:#f8f9fa;border:1px solid #d5d7da;border-radius:3.2px"></div>
<div class="a" style="left:1597px;top:386.4px;width:1px;height:28.8px;background:#d5d7da"></div>
<div class="a" style="left:1545px;top:391.9px;white-space:nowrap;font-size:12.25px;line-height:17px;color:#343a40">Price</div>
<div class="a" style="left:1575.9px;top:393.4px;width:13px;height:14px;background:#17a2b8;border-radius:4px;color:#fff;font-size:9.5px;line-height:14px;text-align:center;font-weight:bold">0</div>
<div class="a" style="left:1606px;top:398.4px;width:0;height:0;border-left:3.25px solid transparent;border-right:3.25px solid transparent;border-top:3.3px solid #343a40"></div>
<div class="a" style="left:1626px;top:381px;width:18px;height:40px;overflow:hidden"><div class="a" style="left:6px;top:5.5px;width:60px;height:28px;background:#f8f9fa;border:1px solid #d5d7da;border-radius:4px"></div><div class="a" style="left:15px;top:11px;font-size:12.25px;line-height:17px;color:#343a40">Itinerary</div></div>
<div class="a" style="left:347px;top:516.8px;white-space:nowrap;font-size:16px;line-height:24px;color:#212529">2.</div>
<div class="a" style="left:369.5px;top:516.8px;white-space:nowrap;font-size:16px;line-height:24px;color:#212529">5</div>
<div class="a" style="left:405.5px;top:516.8px;white-space:nowrap;font-size:16px;line-height:24px;color:#212529">Day<br>Tour</div>
<div class="a" style="left:455.5px;top:516.8px;white-space:nowrap;font-size:16px;line-height:24px;color:#212529">Alexandria</div>
<div class="a" style="left:541.5px;top:516.8px;white-space:nowrap;font-size:16px;line-height:24px;color:#212529">Alexandria<br>Day Tour</div>
<div class="a" style="left:890.5px;top:516.8px;white-space:nowrap;font-size:16px;line-height:24px;color:#212529">135</div>
<div class="a" style="left:947.5px;top:516.8px;white-space:nowrap;font-size:16px;line-height:24px;color:#212529">Every<br>Day</div>
<div class="a" style="left:998.5px;top:516.8px;white-space:nowrap;font-size:16px;line-height:24px;color:#212529">8 Hours</div>
<div class="a" style="left:1079.5px;top:516.8px;white-space:nowrap;font-size:16px;line-height:24px;color:#212529">100</div>
<div class="a" style="left:1157px;top:516.4px;width:165px;height:28.8px;background:#f8f9fa;border:1px solid #d5d7da;border-radius:3.2px"></div>
<div class="a" style="left:1190px;top:516.4px;width:1px;height:28.8px;background:#d5d7da"></div>
<div class="a" style="left:1223px;top:516.4px;width:1px;height:28.8px;background:#d5d7da"></div>
<div class="a" style="left:1256px;top:516.4px;width:1px;height:28.8px;background:#d5d7da"></div>
<div class="a" style="left:1289px;top:516.4px;width:1px;height:28.8px;background:#d5d7da"></div>
<svg class="a" style="left:1166px;top:520.4px" width="18" height="18" viewBox="0 0 18 18"><circle cx="9.8" cy="7.7" r="5.5" stroke="#3d3d3d" stroke-width="2.2" fill="none"/><path d="M1.5 16.2l4.3-4.3" stroke="#3d3d3d" stroke-width="2.4" stroke-linecap="round"/></svg>
<svg class="a" style="left:1199px;top:521.9px" width="16" height="16" viewBox="0 0 16 16"><path d="M3 12.5l8.2-8.2" stroke="#3d3d3d" stroke-width="4.8"/><path d="M10.2 3.3l1.6-1.6q.8-.8 1.6 0l1.1 1.1q.8.8 0 1.6l-1.6 1.6z" fill="#3d3d3d"/><path d="M0.8 14.7l0.7-4 3.3 3.3z" fill="#3d3d3d"/><path d="M2 11.5l8.5-8.5" stroke="#f8f9fa" stroke-width="0.6" opacity="0.6"/><path d="M9.6 3.9l2.5 2.5" stroke="#f8f9fa" stroke-width="0.8"/></svg>
<svg class="a" style="left:1231px;top:520.4px" width="18" height="18" viewBox="0 0 18 18"><path d="M4 12.6l9-9" stroke="#3d3d3d" stroke-width="4.6"/><path d="M12 2.6l1.3-1.3q.9-.9 1.8 0l1 1q.9.9 0 1.8l-1.3 1.3z" fill="#3d3d3d"/><path d="M2.2 15.2l0.9-4 3.1 3.1z" fill="#3d3d3d"/><path d="M11.3 3.3l2.6 2.6" stroke="#f8f9fa" stroke-width="0.7"/><path d="M1 16.4h16.6" stroke="#3d3d3d" stroke-width="1.2"/></svg>
<svg class="a" style="left:1264px;top:520.4px" width="18" height="18" viewBox="0 0 18 18"><path d="M1.5 4.2L4.5 1.2H11.6V13.6H1.5Z" stroke="#3d3d3d" stroke-width="1.3" fill="#fff"/><path d="M1.5 4.2H4.5V1.2" stroke="#3d3d3d" stroke-width="1.1" fill="none"/><path d="M7.6 7.8L10.6 4.8H17V16.6H7.6Z" stroke="#3d3d3d" stroke-width="1.3" fill="#fff"/><path d="M7.6 7.8H10.6V4.8" stroke="#3d3d3d" stroke-width="1.1" fill="none"/></svg>
<svg class="a" style="left:1298px;top:520.4px" width="18" height="18" viewBox="0 0 18 18"><path d="M2.1 4L4.9 1.2H10.3V11.5H2.1Z" stroke="#3d3d3d" stroke-width="1.2" fill="#fff"/><path d="M2.1 4H4.9V1.2" stroke="#3d3d3d" stroke-width="1" fill="none"/><path d="M6.7 7L9.5 4.2H14.9V14.2H6.7Z" stroke="#3d3d3d" stroke-width="1.2" fill="#fff"/><path d="M6.7 7H9.5V4.2" stroke="#3d3d3d" stroke-width="1" fill="none"/><path d="M0.5 16.4h16" stroke="#3d3d3d" stroke-width="1.2"/></svg>
<div class="a" style="left:1334px;top:516.4px;width:96px;height:28.8px;background:#f8f9fa;border:1px solid #d5d7da;border-radius:3.2px"></div>
<div class="a" style="left:1406px;top:516.4px;width:1px;height:28.8px;background:#d5d7da"></div>
<div class="a" style="left:1343px;top:521.9px;white-space:nowrap;font-size:12.25px;line-height:17px;color:#343a40">Gallery</div>
<div class="a" style="left:1384.6px;top:523.4px;width:13px;height:14px;background:#17a2b8;border-radius:4px;color:#fff;font-size:9.5px;line-height:14px;text-align:center;font-weight:bold">2</div>
<div class="a" style="left:1415px;top:528.4px;width:0;height:0;border-left:3.25px solid transparent;border-right:3.25px solid transparent;border-top:3.3px solid #343a40"></div>
<div class="a" style="left:1440px;top:516.4px;width:86px;height:28.8px;background:#f8f9fa;border:1px solid #d5d7da;border-radius:3.2px"></div>
<div class="a" style="left:1502px;top:516.4px;width:1px;height:28.8px;background:#d5d7da"></div>
<div class="a" style="left:1449px;top:521.9px;white-space:nowrap;font-size:12.25px;line-height:17px;color:#343a40">Hotel</div>
<div class="a" style="left:1480.6px;top:523.4px;width:13px;height:14px;background:#17a2b8;border-radius:4px;color:#fff;font-size:9.5px;line-height:14px;text-align:center;font-weight:bold">0</div>
<div class="a" style="left:1511px;top:528.4px;width:0;height:0;border-left:3.25px solid transparent;border-right:3.25px solid transparent;border-top:3.3px solid #343a40"></div>
<div class="a" style="left:1536px;top:516.4px;width:85px;height:28.8px;background:#f8f9fa;border:1px solid #d5d7da;border-radius:3.2px"></div>
<div class="a" style="left:1597px;top:516.4px;width:1px;height:28.8px;background:#d5d7da"></div>
<div class="a" style="left:1545px;top:521.9px;white-space:nowrap;font-size:12.25px;line-height:17px;color:#343a40">Price</div>
<div class="a" style="left:1575.9px;top:523.4px;width:13px;height:14px;background:#17a2b8;border-radius:4px;color:#fff;font-size:9.5px;line-height:14px;text-align:center;font-weight:bold">1</div>
<div class="a" style="left:1606px;top:528.4px;width:0;height:0;border-left:3.25px solid transparent;border-right:3.25px solid transparent;border-top:3.3px solid #343a40"></div>
<div class="a" style="left:1626px;top:511px;width:18px;height:40px;overflow:hidden"><div class="a" style="left:6px;top:5.5px;width:60px;height:28px;background:#f8f9fa;border:1px solid #d5d7da;border-radius:4px"></div><div class="a" style="left:15px;top:11px;font-size:12.25px;line-height:17px;color:#343a40">Itinerary</div></div>
<div class="a" style="left:347px;top:718.8px;white-space:nowrap;font-size:16px;line-height:24px;color:#212529">3.</div>
<div class="a" style="left:369.5px;top:718.8px;white-space:nowrap;font-size:16px;line-height:24px;color:#212529">6</div>
<div class="a" style="left:405.5px;top:718.8px;white-space:nowrap;font-size:16px;line-height:24px;color:#212529">Day<br>Tour</div>
<div class="a" style="left:455.5px;top:718.8px;white-space:nowrap;font-size:16px;line-height:24px;color:#212529">Cairo</div>
<div class="a" style="left:541.5px;top:718.8px;white-space:nowrap;font-size:16px;line-height:24px;color:#212529">Day Trip<br>to Luxor<br>from Cairo<br>by Air</div>
<div class="a" style="left:890.5px;top:718.8px;white-space:nowrap;font-size:16px;line-height:24px;color:#212529">565</div>
<div class="a" style="left:947.5px;top:718.8px;white-space:nowrap;font-size:16px;line-height:24px;color:#212529">every<br>day</div>
<div class="a" style="left:998.5px;top:718.8px;white-space:nowrap;font-size:16px;line-height:24px;color:#212529">12 Hours</div>
<div class="a" style="left:1079.5px;top:718.8px;white-space:nowrap;font-size:16px;line-height:24px;color:#212529">100</div>
<div class="a" style="left:1157px;top:719.3px;width:165px;height:28.8px;background:#f8f9fa;border:1px solid #d5d7da;border-radius:3.2px"></div>
<div class="a" style="left:1190px;top:719.3px;width:1px;height:28.8px;background:#d5d7da"></div>
<div class="a" style="left:1223px;top:719.3px;width:1px;height:28.8px;background:#d5d7da"></div>
<div class="a" style="left:1256px;top:719.3px;width:1px;height:28.8px;background:#d5d7da"></div>
<div class="a" style="left:1289px;top:719.3px;width:1px;height:28.8px;background:#d5d7da"></div>
<svg class="a" style="left:1166px;top:723.3px" width="18" height="18" viewBox="0 0 18 18"><circle cx="9.8" cy="7.7" r="5.5" stroke="#3d3d3d" stroke-width="2.2" fill="none"/><path d="M1.5 16.2l4.3-4.3" stroke="#3d3d3d" stroke-width="2.4" stroke-linecap="round"/></svg>
<svg class="a" style="left:1199px;top:724.8px" width="16" height="16" viewBox="0 0 16 16"><path d="M3 12.5l8.2-8.2" stroke="#3d3d3d" stroke-width="4.8"/><path d="M10.2 3.3l1.6-1.6q.8-.8 1.6 0l1.1 1.1q.8.8 0 1.6l-1.6 1.6z" fill="#3d3d3d"/><path d="M0.8 14.7l0.7-4 3.3 3.3z" fill="#3d3d3d"/><path d="M2 11.5l8.5-8.5" stroke="#f8f9fa" stroke-width="0.6" opacity="0.6"/><path d="M9.6 3.9l2.5 2.5" stroke="#f8f9fa" stroke-width="0.8"/></svg>
<svg class="a" style="left:1231px;top:723.3px" width="18" height="18" viewBox="0 0 18 18"><path d="M4 12.6l9-9" stroke="#3d3d3d" stroke-width="4.6"/><path d="M12 2.6l1.3-1.3q.9-.9 1.8 0l1 1q.9.9 0 1.8l-1.3 1.3z" fill="#3d3d3d"/><path d="M2.2 15.2l0.9-4 3.1 3.1z" fill="#3d3d3d"/><path d="M11.3 3.3l2.6 2.6" stroke="#f8f9fa" stroke-width="0.7"/><path d="M1 16.4h16.6" stroke="#3d3d3d" stroke-width="1.2"/></svg>
<svg class="a" style="left:1264px;top:723.3px" width="18" height="18" viewBox="0 0 18 18"><path d="M1.5 4.2L4.5 1.2H11.6V13.6H1.5Z" stroke="#3d3d3d" stroke-width="1.3" fill="#fff"/><path d="M1.5 4.2H4.5V1.2" stroke="#3d3d3d" stroke-width="1.1" fill="none"/><path d="M7.6 7.8L10.6 4.8H17V16.6H7.6Z" stroke="#3d3d3d" stroke-width="1.3" fill="#fff"/><path d="M7.6 7.8H10.6V4.8" stroke="#3d3d3d" stroke-width="1.1" fill="none"/></svg>
<svg class="a" style="left:1298px;top:723.3px" width="18" height="18" viewBox="0 0 18 18"><path d="M2.1 4L4.9 1.2H10.3V11.5H2.1Z" stroke="#3d3d3d" stroke-width="1.2" fill="#fff"/><path d="M2.1 4H4.9V1.2" stroke="#3d3d3d" stroke-width="1" fill="none"/><path d="M6.7 7L9.5 4.2H14.9V14.2H6.7Z" stroke="#3d3d3d" stroke-width="1.2" fill="#fff"/><path d="M6.7 7H9.5V4.2" stroke="#3d3d3d" stroke-width="1" fill="none"/><path d="M0.5 16.4h16" stroke="#3d3d3d" stroke-width="1.2"/></svg>
<div class="a" style="left:1334px;top:719.3px;width:96px;height:28.8px;background:#f8f9fa;border:1px solid #d5d7da;border-radius:3.2px"></div>
<div class="a" style="left:1406px;top:719.3px;width:1px;height:28.8px;background:#d5d7da"></div>
<div class="a" style="left:1343px;top:724.8px;white-space:nowrap;font-size:12.25px;line-height:17px;color:#343a40">Gallery</div>
<div class="a" style="left:1384.6px;top:726.3px;width:13px;height:14px;background:#17a2b8;border-radius:4px;color:#fff;font-size:9.5px;line-height:14px;text-align:center;font-weight:bold">8</div>
<div class="a" style="left:1415px;top:731.3px;width:0;height:0;border-left:3.25px solid transparent;border-right:3.25px solid transparent;border-top:3.3px solid #343a40"></div>
<div class="a" style="left:1440px;top:719.3px;width:86px;height:28.8px;background:#f8f9fa;border:1px solid #d5d7da;border-radius:3.2px"></div>
<div class="a" style="left:1502px;top:719.3px;width:1px;height:28.8px;background:#d5d7da"></div>
<div class="a" style="left:1449px;top:724.8px;white-space:nowrap;font-size:12.25px;line-height:17px;color:#343a40">Hotel</div>
<div class="a" style="left:1480.6px;top:726.3px;width:13px;height:14px;background:#17a2b8;border-radius:4px;color:#fff;font-size:9.5px;line-height:14px;text-align:center;font-weight:bold">0</div>
<div class="a" style="left:1511px;top:731.3px;width:0;height:0;border-left:3.25px solid transparent;border-right:3.25px solid transparent;border-top:3.3px solid #343a40"></div>
<div class="a" style="left:1536px;top:719.3px;width:85px;height:28.8px;background:#f8f9fa;border:1px solid #d5d7da;border-radius:3.2px"></div>
<div class="a" style="left:1597px;top:719.3px;width:1px;height:28.8px;background:#d5d7da"></div>
<div class="a" style="left:1545px;top:724.8px;white-space:nowrap;font-size:12.25px;line-height:17px;color:#343a40">Price</div>
<div class="a" style="left:1575.9px;top:726.3px;width:13px;height:14px;background:#17a2b8;border-radius:4px;color:#fff;font-size:9.5px;line-height:14px;text-align:center;font-weight:bold">1</div>
<div class="a" style="left:1606px;top:731.3px;width:0;height:0;border-left:3.25px solid transparent;border-right:3.25px solid transparent;border-top:3.3px solid #343a40"></div>
<div class="a" style="left:1626px;top:713px;width:18px;height:40px;overflow:hidden"><div class="a" style="left:6px;top:5.5px;width:60px;height:28px;background:#f8f9fa;border:1px solid #d5d7da;border-radius:4px"></div><div class="a" style="left:15px;top:11px;font-size:12.25px;line-height:17px;color:#343a40">Itinerary</div></div>
<div class="a" style="left:347px;top:829.8px;white-space:nowrap;font-size:16px;line-height:24px;color:#212529">4.</div>
<div class="a" style="left:369.5px;top:829.8px;white-space:nowrap;font-size:16px;line-height:24px;color:#212529">7</div>
<div class="a" style="left:405.5px;top:829.8px;white-space:nowrap;font-size:16px;line-height:24px;color:#212529">Day<br>Tour</div>
<div class="a" style="left:455.5px;top:829.8px;white-space:nowrap;font-size:16px;line-height:24px;color:#212529">Cairo</div>
<div class="a" style="left:541.5px;top:829.8px;white-space:nowrap;font-size:16px;line-height:24px;color:#212529">Day Tour<br>To Islamic<br>And<br>Christian<br>Cairo</div>
<div class="a" style="left:890.5px;top:829.8px;white-space:nowrap;font-size:16px;line-height:24px;color:#212529">130</div>
<div class="a" style="left:947.5px;top:829.8px;white-space:nowrap;font-size:16px;line-height:24px;color:#212529">every<br>day</div>
<div class="a" style="left:998.5px;top:829.8px;white-space:nowrap;font-size:16px;line-height:24px;color:#212529">8 Hours</div>
<div class="a" style="left:1079.5px;top:829.8px;white-space:nowrap;font-size:16px;line-height:24px;color:#212529">100</div>
<div class="a" style="left:1157px;top:829.3px;width:165px;height:28.8px;background:#f8f9fa;border:1px solid #d5d7da;border-radius:3.2px"></div>
<div class="a" style="left:1190px;top:829.3px;width:1px;height:28.8px;background:#d5d7da"></div>
<div class="a" style="left:1223px;top:829.3px;width:1px;height:28.8px;background:#d5d7da"></div>
<div class="a" style="left:1256px;top:829.3px;width:1px;height:28.8px;background:#d5d7da"></div>
<div class="a" style="left:1289px;top:829.3px;width:1px;height:28.8px;background:#d5d7da"></div>
<svg class="a" style="left:1166px;top:833.3px" width="18" height="18" viewBox="0 0 18 18"><circle cx="9.8" cy="7.7" r="5.5" stroke="#3d3d3d" stroke-width="2.2" fill="none"/><path d="M1.5 16.2l4.3-4.3" stroke="#3d3d3d" stroke-width="2.4" stroke-linecap="round"/></svg>
<svg class="a" style="left:1199px;top:834.8px" width="16" height="16" viewBox="0 0 16 16"><path d="M3 12.5l8.2-8.2" stroke="#3d3d3d" stroke-width="4.8"/><path d="M10.2 3.3l1.6-1.6q.8-.8 1.6 0l1.1 1.1q.8.8 0 1.6l-1.6 1.6z" fill="#3d3d3d"/><path d="M0.8 14.7l0.7-4 3.3 3.3z" fill="#3d3d3d"/><path d="M2 11.5l8.5-8.5" stroke="#f8f9fa" stroke-width="0.6" opacity="0.6"/><path d="M9.6 3.9l2.5 2.5" stroke="#f8f9fa" stroke-width="0.8"/></svg>
<svg class="a" style="left:1231px;top:833.3px" width="18" height="18" viewBox="0 0 18 18"><path d="M4 12.6l9-9" stroke="#3d3d3d" stroke-width="4.6"/><path d="M12 2.6l1.3-1.3q.9-.9 1.8 0l1 1q.9.9 0 1.8l-1.3 1.3z" fill="#3d3d3d"/><path d="M2.2 15.2l0.9-4 3.1 3.1z" fill="#3d3d3d"/><path d="M11.3 3.3l2.6 2.6" stroke="#f8f9fa" stroke-width="0.7"/><path d="M1 16.4h16.6" stroke="#3d3d3d" stroke-width="1.2"/></svg>
<svg class="a" style="left:1264px;top:833.3px" width="18" height="18" viewBox="0 0 18 18"><path d="M1.5 4.2L4.5 1.2H11.6V13.6H1.5Z" stroke="#3d3d3d" stroke-width="1.3" fill="#fff"/><path d="M1.5 4.2H4.5V1.2" stroke="#3d3d3d" stroke-width="1.1" fill="none"/><path d="M7.6 7.8L10.6 4.8H17V16.6H7.6Z" stroke="#3d3d3d" stroke-width="1.3" fill="#fff"/><path d="M7.6 7.8H10.6V4.8" stroke="#3d3d3d" stroke-width="1.1" fill="none"/></svg>
<svg class="a" style="left:1298px;top:833.3px" width="18" height="18" viewBox="0 0 18 18"><path d="M2.1 4L4.9 1.2H10.3V11.5H2.1Z" stroke="#3d3d3d" stroke-width="1.2" fill="#fff"/><path d="M2.1 4H4.9V1.2" stroke="#3d3d3d" stroke-width="1" fill="none"/><path d="M6.7 7L9.5 4.2H14.9V14.2H6.7Z" stroke="#3d3d3d" stroke-width="1.2" fill="#fff"/><path d="M6.7 7H9.5V4.2" stroke="#3d3d3d" stroke-width="1" fill="none"/><path d="M0.5 16.4h16" stroke="#3d3d3d" stroke-width="1.2"/></svg>
<div class="a" style="left:1334px;top:829.3px;width:96px;height:28.8px;background:#f8f9fa;border:1px solid #d5d7da;border-radius:3.2px"></div>
<div class="a" style="left:1406px;top:829.3px;width:1px;height:28.8px;background:#d5d7da"></div>
<div class="a" style="left:1343px;top:834.8px;white-space:nowrap;font-size:12.25px;line-height:17px;color:#343a40">Gallery</div>
<div class="a" style="left:1384.6px;top:836.3px;width:13px;height:14px;background:#17a2b8;border-radius:4px;color:#fff;font-size:9.5px;line-height:14px;text-align:center;font-weight:bold">5</div>
<div class="a" style="left:1415px;top:841.3px;width:0;height:0;border-left:3.25px solid transparent;border-right:3.25px solid transparent;border-top:3.3px solid #343a40"></div>
<div class="a" style="left:1440px;top:829.3px;width:86px;height:28.8px;background:#f8f9fa;border:1px solid #d5d7da;border-radius:3.2px"></div>
<div class="a" style="left:1502px;top:829.3px;width:1px;height:28.8px;background:#d5d7da"></div>
<div class="a" style="left:1449px;top:834.8px;white-space:nowrap;font-size:12.25px;line-height:17px;color:#343a40">Hotel</div>
<div class="a" style="left:1480.6px;top:836.3px;width:13px;height:14px;background:#17a2b8;border-radius:4px;color:#fff;font-size:9.5px;line-height:14px;text-align:center;font-weight:bold">0</div>
<div class="a" style="left:1511px;top:841.3px;width:0;height:0;border-left:3.25px solid transparent;border-right:3.25px solid transparent;border-top:3.3px solid #343a40"></div>
<div class="a" style="left:1536px;top:829.3px;width:85px;height:28.8px;background:#f8f9fa;border:1px solid #d5d7da;border-radius:3.2px"></div>
<div class="a" style="left:1597px;top:829.3px;width:1px;height:28.8px;background:#d5d7da"></div>
<div class="a" style="left:1545px;top:834.8px;white-space:nowrap;font-size:12.25px;line-height:17px;color:#343a40">Price</div>
<div class="a" style="left:1575.9px;top:836.3px;width:13px;height:14px;background:#17a2b8;border-radius:4px;color:#fff;font-size:9.5px;line-height:14px;text-align:center;font-weight:bold">1</div>
<div class="a" style="left:1606px;top:841.3px;width:0;height:0;border-left:3.25px solid transparent;border-right:3.25px solid transparent;border-top:3.3px solid #343a40"></div>
<div class="a" style="left:1626px;top:824px;width:18px;height:40px;overflow:hidden"><div class="a" style="left:6px;top:5.5px;width:60px;height:28px;background:#f8f9fa;border:1px solid #d5d7da;border-radius:4px"></div><div class="a" style="left:15px;top:11px;font-size:12.25px;line-height:17px;color:#343a40">Itinerary</div></div>
<div class="a" style="left:629px;top:387px;width:250px;height:100px;background:#fff;border:1px solid #dee2e6;border-radius:4px"></div>
<div class="a" id="img0" style="left:634px;top:392px;width:240px;height:90px;overflow:hidden"><svg width="240" height="90" viewBox="0 0 240 90">
<defs>
<linearGradient id="s1" x1="0" y1="0" x2="0" y2="1">
<stop offset="0" stop-color="#5868a8"/><stop offset="0.22" stop-color="#7a7c98"/><stop offset="0.34" stop-color="#d89838"/><stop offset="0.5" stop-color="#f0a020"/><stop offset="0.69" stop-color="#e8701c"/><stop offset="0.7" stop-color="#b8b4b8"/><stop offset="1" stop-color="#a8b0c8"/></linearGradient>
<linearGradient id="s1b" x1="0" y1="0" x2="1" y2="0.3">
<stop offset="0" stop-color="#e0b040" stop-opacity="0.5"/><stop offset="0.35" stop-color="#c09040" stop-opacity="0.25"/><stop offset="0.55" stop-color="#2a48b8" stop-opacity="0.75"/><stop offset="1" stop-color="#3458c8" stop-opacity="0.7"/></linearGradient>
<radialGradient id="s1c" cx="0.85" cy="0.75" r="0.5"><stop offset="0" stop-color="#f89048" stop-opacity="0.9"/><stop offset="1" stop-color="#f89048" stop-opacity="0"/></radialGradient>
<linearGradient id="py1" x1="0" y1="0" x2="1" y2="0.4"><stop offset="0" stop-color="#60647e"/><stop offset="1" stop-color="#8a8ca4"/></linearGradient>
<linearGradient id="gr1" x1="0" y1="0" x2="0" y2="1"><stop offset="0" stop-color="#c8c4c4"/><stop offset="1" stop-color="#9aa0b8"/></linearGradient>
</defs>
<rect width="240" height="90" fill="url(#s1)"/>
<mask id="m1"><rect width="240" height="90" fill="url(#m1g)"/></mask><linearGradient id="m1g" x1="0" y1="0" x2="0" y2="1"><stop offset="0" stop-color="#fff"/><stop offset="0.28" stop-color="#fff"/><stop offset="0.5" stop-color="#000"/></linearGradient>
<rect width="240" height="90" fill="url(#s1b)" mask="url(#m1)"/>
<rect x="120" y="25" width="120" height="40" fill="url(#s1c)"/>
<path d="M0 4 Q30 1 70 6 T150 3 T240 7" stroke="#f0e0a0" stroke-width="1.4" fill="none" opacity="0.5"/>
<path d="M5 11 Q50 7 95 13 T190 10 T240 14" stroke="#e8d8b0" stroke-width="1.6" fill="none" opacity="0.5"/>
<path d="M0 18 Q40 14 90 20 T180 17 T240 21" stroke="#f0c860" stroke-width="2" fill="none" opacity="0.6"/>
<path d="M0 26 Q60 22 120 28 T240 26" stroke="#f8d050" stroke-width="2.2" fill="none" opacity="0.55"/>
<path d="M0 34 Q50 31 110 36" stroke="#f8d040" stroke-width="2.5" fill="none" opacity="0.5"/>
<path d="M10 44 Q60 40 120 46" stroke="#f8c030" stroke-width="2" fill="none" opacity="0.45"/>
<path d="M70 40 Q100 38 130 41" stroke="#d86020" stroke-width="2" fill="none" opacity="0.5"/>
<path d="M0 52 Q50 49 100 54" stroke="#f8b030" stroke-width="2" fill="none" opacity="0.4"/>
<path d="M124 61 L168 32 L207 61z" fill="url(#py1)"/>
<path d="M168 32 L207 61 L192 61z" fill="#9a9cb0" opacity="0.5"/>
<path d="M30 62 L35 53.5 L51 62z" fill="#6a5a64"/>
<path d="M20 62 L35 53.5 L40 62z" fill="#7a6670"/>
<path d="M0 62 L5 59 L11 62z" fill="#806070"/>
<rect x="0" y="61" width="240" height="14" fill="url(#gr1)"/>
<path d="M0 66 h50 M70 68 h50 M130 66 h60" stroke="#4a4a52" stroke-width="2.5" opacity="0.45"/>
<path d="M110 62 Q104 58 100 61 L98 68 L116 68 Q116 62 110 62z" fill="#4a4644"/>
<path d="M197 70 Q195 60 208 58 Q222 55 240 58 V70z" fill="#2a3430"/>
<rect x="0" y="73" width="240" height="2" fill="#606890"/>
<rect x="0" y="75" width="240" height="15" fill="#848cb2"/>
<path d="M0 79 L72 80 L30 88 L0 88z" fill="#d0d4f0"/>
<circle cx="192" cy="72" r="1.6" fill="#3a3a40"/>
<path d="M189 74 h6 l1 8 l-2 5 h-3 l-2 -5z" fill="#d8d8e0"/>
<circle cx="201" cy="71" r="1.8" fill="#202024"/>
<path d="M197 73 h8 l2 9 l-3 5 h-4 l-3 -5z" fill="#2a2a30"/>
</svg></div>
<div class="a" style="left:629px;top:517px;width:250px;height:190px;background:#fff;border:1px solid #dee2e6;border-radius:4px"></div>
<div class="a" id="img1" style="left:634px;top:522px;width:240px;height:180px;overflow:hidden"><svg width="240" height="180" viewBox="0 0 240 180">
<defs>
<linearGradient id="s2" x1="0" y1="0" x2="0" y2="1"><stop offset="0" stop-color="#78bdee"/><stop offset="0.55" stop-color="#a8d6f4"/><stop offset="1" stop-color="#c0e2f6"/></linearGradient>
<linearGradient id="w2" x1="0" y1="0" x2="0" y2="1"><stop offset="0" stop-color="#20a0c4"/><stop offset="0.5" stop-color="#1890b4"/><stop offset="1" stop-color="#127ca0"/></linearGradient>
<linearGradient id="f2" x1="0" y1="0" x2="0" y2="1"><stop offset="0" stop-color="#ecd6aa"/><stop offset="1" stop-color="#d0b486"/></linearGradient>
</defs>
<rect width="240" height="180" fill="url(#s2)"/>
<path d="M0 40 Q80 30 160 45" stroke="#d8ecf8" stroke-width="3" fill="none" opacity="0.4"/>
<path d="M60 25 Q140 20 230 35" stroke="#d8ecf8" stroke-width="2" fill="none" opacity="0.4"/>
<rect x="102" y="50" width="88" height="27" fill="url(#f2)"/>
<rect x="100" y="46" width="10" height="31" fill="#e6cc9e" rx="4"/>
<rect x="152" y="48" width="12" height="29" fill="#dcc092" rx="4"/>
<rect x="180" y="56" width="9" height="21" fill="#e6cc9e" rx="3"/>
<rect x="128" y="45" width="34" height="8" fill="#e2c898"/>
<path d="M102 49.5 h88" stroke="#c8a878" stroke-width="1.5" stroke-dasharray="2 1.5"/>
<path d="M112 58 h36 M112 63 h36" stroke="#b89868" stroke-width="1.2" stroke-dasharray="1.5 3" opacity="0.7"/>
<rect x="148" y="27" width="0.9" height="20" fill="#555"/>
<rect x="148.5" y="27" width="3" height="3" fill="#c02020"/>
<rect x="8" y="77" width="232" height="29" fill="url(#f2)"/>
<rect x="57" y="75" width="20" height="31" fill="#dec494" rx="5"/>
<rect x="150" y="76" width="17" height="30" fill="#dec494" rx="4"/>
<rect x="212" y="74" width="28" height="32" fill="#dcc294" rx="5"/>
<path d="M12 84 h40 M80 86 h70 M170 86 h40" stroke="#b89868" stroke-width="1" stroke-dasharray="3 4" opacity="0.6"/>
<rect x="16" y="95" width="18" height="8" fill="#8a7658"/>
<path d="M133 80 v26 M141 80 v26 M151 80 v26" stroke="#7a7060" stroke-width="1" opacity="0.8"/>
<rect x="0" y="104" width="240" height="76" fill="url(#w2)"/>
<path d="M0 102 L88 104 L89 112 L0 109z" fill="#585650"/>
<path d="M88 104 L215 108 L240 108 L240 113 L200 113 L150 111 L95 109z" fill="#8a8884"/>
<rect x="88" y="104" width="12" height="8" fill="#c8a860"/>
<path d="M100 110 Q150 113 187 117 Q205 123 214 131 Q224 147 221 167 Q218 175 212 180 L240 180 L240 110 L200 112z" fill="#6a645c"/>
<path d="M190 118 Q208 126 216 140 M205 150 Q215 160 213 172" stroke="#a8a298" stroke-width="2" fill="none" opacity="0.6"/>
<path d="M27 116 h14 l-2 3.5 h-10z" fill="#f4f4f4"/>
<path d="M0 130 Q60 122 120 140" stroke="#48b8d8" stroke-width="3" fill="none" opacity="0.35"/>
<path d="M40 158 Q100 148 170 163" stroke="#48b8d8" stroke-width="3" fill="none" opacity="0.3"/>
<path d="M180 162 h9 M186 152 h6" stroke="#e8f8ff" stroke-width="1.8" opacity="0.8"/>
</svg></div>
<div class="a" style="left:629px;top:720px;width:250px;height:98px;background:#fff;border:1px solid #dee2e6;border-radius:4px"></div>
<div class="a" id="img2" style="left:634px;top:725px;width:240px;height:88px;overflow:hidden"><svg width="240" height="88" viewBox="0 0 240 88">
<defs>
<linearGradient id="s3" x1="0" y1="0" x2="0" y2="1"><stop offset="0" stop-color="#c4a46e"/><stop offset="0.5" stop-color="#c8a676"/><stop offset="1" stop-color="#d4b88c"/></linearGradient>
</defs>
<rect width="240" height="88" fill="url(#s3)"/>
<path d="M0 0 H240 V8 Q180 12 120 10 Q60 14 0 12z" fill="#bc9a64" opacity="0.7"/>
<path d="M128 2 Q150 25 200 32 L240 40 L240 22 Q200 12 175 2z" fill="#9a7850" opacity="0.55"/>
<path d="M150 20 Q170 30 190 34" stroke="#7a5a3a" stroke-width="3" fill="none" opacity="0.4"/>
<path d="M0 22 L22 20 L30 50 L10 66 L0 66z" fill="#9a7a50" opacity="0.55"/>
<path d="M30 33 L136 19 L140 32 L31 44z" fill="#e4cca2"/>
<path d="M136 19 L143 33 L136 33z" fill="#a07050"/>
<path d="M60 50 L150 38 L200 36 L236 40 L236 45 L150 44 L60 54z" fill="#8a6a48" opacity="0.45"/>
<path d="M73 57 L192 39 L192 47 L73 66z" fill="#e8d2aa"/>
<path d="M76 61 L190 43" stroke="#6a4a2a" stroke-width="4.5" stroke-dasharray="1.5 2.2" opacity="0.75"/>
<path d="M154 55 L224 45 L224 53 L154 63z" fill="#e6cea6"/>
<path d="M157 58.5 L222 49" stroke="#6a4a2a" stroke-width="4" stroke-dasharray="1.5 2.2" opacity="0.7"/>
<path d="M64 78 L139 62 L139 70 L64 86z" fill="#e8d2aa"/>
<path d="M67 81.5 L137 66.5" stroke="#6a4a2a" stroke-width="4.5" stroke-dasharray="1.5 2.2" opacity="0.75"/>
<path d="M100 88 L140 70 L150 63 L240 60 L240 88z" fill="#d8c49e"/>
<path d="M141 59 L219 81 L212 84 L139 64z" fill="#c0a880"/>
<path d="M0 66 L40 62 L60 88 L0 88z" fill="#a48460" opacity="0.75"/>
<path d="M36 48 L66 46 L66 56 L36 58z" fill="#8a6a48" opacity="0.6"/>
</svg></div>
<div class="a" style="left:629px;top:830px;width:250px;height:98px;background:#fff;border:1px solid #dee2e6;border-radius:4px"></div>
<div class="a" id="img3" style="left:634px;top:835px;width:240px;height:88px;overflow:hidden"><svg width="240" height="88" viewBox="0 0 240 88">
<defs>
<linearGradient id="s4" x1="0" y1="0" x2="0" y2="1"><stop offset="0" stop-color="#665572"/><stop offset="1" stop-color="#7a6682"/></linearGradient>
<linearGradient id="d4" x1="0" y1="0" x2="0" y2="1"><stop offset="0" stop-color="#b8a890"/><stop offset="0.7" stop-color="#d8c898"/><stop offset="1" stop-color="#f0d890"/></linearGradient>
</defs>
<rect width="240" height="88" fill="url(#s4)"/>
<rect x="100" y="42" width="36" height="9" fill="#9a7a48"/>
<path d="M101 44 Q102 31 118 30 Q134 31 135 44z" fill="url(#d4)"/>
<rect x="117.5" y="26" width="1" height="5" fill="#c0a070"/>
<path d="M86 57 Q88 49 105 48 Q122 49 124 57z" fill="url(#d4)"/>
<path d="M124 57 Q127 50 143 50 Q159 50 162 57z" fill="url(#d4)"/>
<path d="M76 57 Q78 53 88 53 L90 57z" fill="#b0a090"/>
<path d="M150 57 Q152 53 162 53 L164 57z" fill="#b0a090"/>
<rect x="97" y="45" width="4" height="7" fill="#c07080"/>
<rect x="135" y="45" width="4" height="7" fill="#a87060"/>
<rect x="68" y="57" width="101" height="14" fill="#b89038"/>
<rect x="68" y="57" width="101" height="2.5" fill="#9a7ab8"/>
<path d="M72 63 h95" stroke="#f0d060" stroke-width="6" stroke-dasharray="2.2 3.2"/>
<path d="M136 0 L139 0 L140.5 12 L141 58 L134 58 L134.5 12z" fill="#a47a40"/>
<rect x="134.5" y="14" width="6" height="18" fill="#d87898"/>
<path d="M163 0 L166 0 L167.5 12 L168 58 L161 58 L161.5 12z" fill="#a86a58"/>
<rect x="161.5" y="14" width="6" height="38" fill="#c86890" opacity="0.9"/>
<rect x="53" y="48" width="6" height="14" fill="#d0a040"/>
<rect x="54.5" y="44" width="3" height="4" fill="#8a6040"/>
<rect x="52" y="60" width="8" height="10" fill="#5a3a30"/>
<rect x="70" y="47" width="4" height="11" fill="#a05a60"/>
<rect x="0" y="63" width="28" height="25" fill="#4a3432"/>
<rect x="28" y="67" width="40" height="21" fill="#4e3630"/>
<rect x="68" y="71" width="172" height="17" fill="#402c2a"/>
<rect x="100" y="71" width="140" height="6" fill="#5a4038"/>
<rect x="68" y="71" width="101" height="3" fill="#7a6030"/>
<rect x="226" y="57" width="10" height="14" fill="#6a5048"/>
<circle cx="64" cy="74" r="1.8" fill="#ffa040"/>
<circle cx="236" cy="77" r="1.8" fill="#ffa040"/>
<circle cx="213" cy="72" r="1.8" fill="#40e0ff"/>
<circle cx="37" cy="69" r="1" fill="#60ff60"/>
<rect x="0" y="84" width="240" height="4" fill="#5a3a30"/>
</svg></div>
<div class="a" style="left:317px;top:1017px;width:1351px;height:1px;background:#dee2e6"></div>
<div class="a" style="left:333px;top:1035.5px;white-space:nowrap;font-size:16px;line-height:24px;color:#869099">©2019 e.World Technology Ltd. All rights reserved.</div>
<!--/MAIN-->
<div id="sb" class="a"></div>
<div id="thumb" class="a"></div>
</body></html>
